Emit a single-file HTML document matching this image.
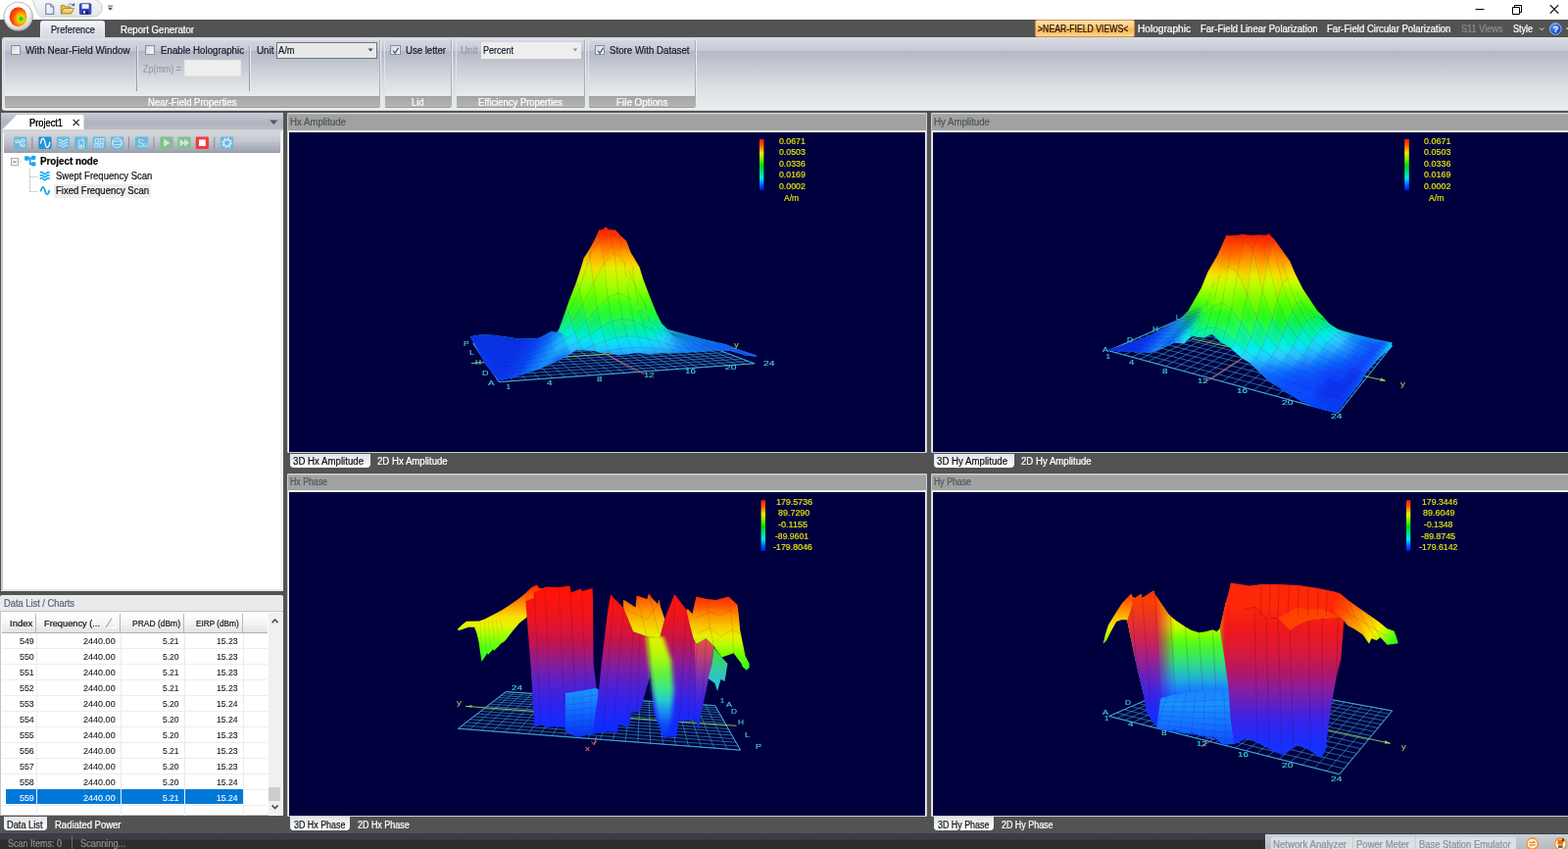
<!DOCTYPE html>
<html lang="en"><head><meta charset="utf-8"><title>Near-Field Views</title>
<style>
*{box-sizing:border-box}
html,body{margin:0;padding:0}
body{width:1600px;height:866px;overflow:hidden;position:relative;background:#535353;font-family:"Liberation Sans",sans-serif;font-size:10px}
.abs{position:absolute}
.t{position:absolute;white-space:pre;line-height:14px;height:14px;transform-origin:0 50%;font-size:10px;-webkit-text-stroke:0.22px currentColor}
#title{position:absolute;left:0;top:0;width:1600px;height:20px;background:#fff}
#tabbar{position:absolute;left:0;top:20px;width:1600px;height:18px;background:#535353}
#qat{position:absolute;left:30px;top:-2px;width:73px;height:19.5px;border:1px solid #b9bdc6;border-radius:0 10px 10px 0/0 10px 10px 0;background:linear-gradient(#f4f5f8,#e4e7ee)}
#tabPref{position:absolute;left:40.5px;top:21.2px;width:66.5px;height:17px;border-radius:3px 3px 0 0;background:linear-gradient(#f4f6f9,#dde1ea 60%,#d6dae4);border:1px solid #e8f4f8;border-bottom:none}
#nfv{position:absolute;left:1055.5px;top:20.2px;width:102px;height:17.8px;border-radius:2px;border:1px solid #c89048;background:linear-gradient(#fde0b0 0%,#fbc878 45%,#f8b048 55%,#fcd890 100%)}
#ribbon{position:absolute;left:1.8px;top:37.6px;width:1600px;height:75px;border-radius:3px 0 0 3px;background:linear-gradient(#b3b8c6 0px,#b3b8c6 14px,#dadfe2 50px,#e9efef 74px);border-left:1.4px solid #e4e7ee;border-bottom:1.3px solid #d9dadc;overflow:hidden}
#ribtop{position:absolute;left:0;top:0;width:100%;height:14.2px;background:linear-gradient(#d9dce4,#c5c9d4)}
.grp{position:absolute;top:40.2px;height:70.2px;border:1px solid #d0d4dc;border-color:#dfe3ea #a9adb6 #9a9a9a #dfe3ea;border-radius:2.5px;background:linear-gradient(#d3d7e1 0px,#c5c9d5 10.6px,#b3b8c6 11px,#dadfe2 44px,#e7eded 57px);overflow:hidden;box-shadow:1px 0 0 #e8ecf0}
.grpl{position:absolute;left:0;right:0;bottom:0;height:11.4px;background:linear-gradient(#a3a3a3,#b6b6b6)}
.cb{position:absolute;width:10.5px;height:10.5px;border:1px solid #8a8e98;background:linear-gradient(135deg,#d4d6da,#fafafa);}
.vsep{position:absolute;top:47px;width:1px;height:46px;background:#9a9ea8;box-shadow:1px 0 0 #e6eaee}
#ltabs{position:absolute;left:1px;top:115px;width:288px;height:18px;background:linear-gradient(#c9cdd6,#aeb3be 55%,#b9bdc6)}
#lpanel{position:absolute;left:1px;top:131.6px;width:288px;height:471.3px;background:#fff;border:1px solid #d9d9d9;border-width:3px 3.5px 2.6px 2.5px;border-color:#d4d4d4 #f2f2f2 #e6e6e6 #c8c8c8}
#ltool{position:absolute;left:4px;top:135px;width:281.5px;height:21.4px;background:linear-gradient(#d3d6dd,#c4c8d0 40%,#a4a9b4 85%,#98a0ac)}
#dlhead{position:absolute;left:0;top:607px;width:289px;height:16.4px;background:#e9eaec;border-radius:2px 2px 0 0}
#dltable{position:absolute;left:0;top:623.2px;width:289px;height:209.2px;background:#fff;border:1px solid #c4c4c4;border-width:1.4px 1px 0.8px 1.6px}
#dlth{position:absolute;left:2px;top:626px;width:271px;height:19.6px;background:linear-gradient(#ffffff,#f4f4f4 50%,#e3e3e3);border-bottom:1px solid #b0b0b0}
.btab{position:absolute;height:14.1px;border-radius:0 0 4px 4px;background:linear-gradient(#dfe3e8,#ffffff);box-shadow:inset 1px 0 0 #d8f0f8}
#status{position:absolute;left:0;top:850px;width:1600px;height:16px;background:linear-gradient(#3a3d48 0,#3c3f4a 6px,#2e2e2e 7px,#2d2d2d 16px)}
.pane{position:absolute;background:#f2f2f2;border-radius:2px;box-shadow:inset 0 0 0 1px #cfcfcf}
.pnavy{position:absolute;background:#00003f}
.phead{position:absolute;background:#a0a2a1;border-top:1px solid #b4b6b5}
</style></head>
<body>
<div id="title"></div>
<div id="tabbar"></div>
<svg class="abs" style="left:0;top:0" width="130" height="38" viewBox="0 0 130 38">
<defs>
<radialGradient id="orbRing" cx="0.42" cy="0.3" r="0.78"><stop offset="0" stop-color="#ffffff"/><stop offset="0.55" stop-color="#fafafa"/><stop offset="0.8" stop-color="#d4d4d4"/><stop offset="1" stop-color="#9a9a9a"/></radialGradient>
<linearGradient id="qatG" x1="0" y1="0" x2="0" y2="1"><stop offset="0" stop-color="#f6f7f9"/><stop offset="1" stop-color="#e2e5ec"/></linearGradient>
<radialGradient id="orbIn" cx="0.66" cy="0.6" r="0.75"><stop offset="0" stop-color="#10c010"/><stop offset="0.1" stop-color="#30d818"/><stop offset="0.22" stop-color="#d8e010"/><stop offset="0.4" stop-color="#ffa000"/><stop offset="0.65" stop-color="#ff4a08"/><stop offset="1" stop-color="#f01808"/></radialGradient>
<linearGradient id="docG" x1="0" y1="0" x2="1" y2="1"><stop offset="0" stop-color="#ffffff"/><stop offset="1" stop-color="#d4ddf0"/></linearGradient>
<linearGradient id="foldG" x1="0" y1="0" x2="0" y2="1"><stop offset="0" stop-color="#fff0a8"/><stop offset="1" stop-color="#e8b030"/></linearGradient>
</defs>
<path d="M32.5 -1 C36.5 5 36 13.5 41.5 17 H95.5 A8.8 8.8 0 0 0 95.5 -0.6 Z" fill="url(#qatG)" stroke="#bfc3cc" stroke-width="0.8"/>
<circle cx="18.7" cy="17.2" r="15.3" fill="#555" opacity="0.3"/>
<circle cx="18.7" cy="16.8" r="14.7" fill="url(#orbRing)" stroke="#8e8e8e" stroke-width="0.5"/>
<ellipse cx="18.6" cy="17.2" rx="8.9" ry="10" fill="url(#orbIn)"/>
<!-- new doc -->
<path d="M46.8 4 h5 l3 3 v7.4 h-8z" fill="url(#docG)" stroke="#5a6a90" stroke-width="0.9"/>
<path d="M51.8 4 v3 h3" fill="none" stroke="#5a6a90" stroke-width="0.8"/>
<!-- folder -->
<path d="M62.3 14 v-8.6 h3.6 l1 1.4 h5 v2" fill="#e8c050" stroke="#a07818" stroke-width="0.8"/>
<path d="M62.3 14 l2.6 -5.4 h10.6 l-2.8 5.4z" fill="url(#foldG)" stroke="#a07818" stroke-width="0.8"/>
<path d="M69.5 4.6 q2.6 -1.8 4.6 0.2 l-1 0.9 3 0.3 -0.2 -3 -0.9 0.9" fill="#4a78d0" stroke="#3058a8" stroke-width="0.4"/>
<!-- save -->
<rect x="81.4" y="3.8" width="11.4" height="10.6" rx="0.8" fill="#3848c8" stroke="#202a90" stroke-width="0.8"/>
<rect x="83.6" y="4.2" width="7" height="4.6" fill="#f4f6ff"/>
<rect x="84.2" y="10.4" width="6" height="3.8" fill="#1a2270"/>
<rect x="85" y="11" width="2" height="2.6" fill="#e8ecff"/>
<!-- dropdown -->
<rect x="110" y="5.6" width="5" height="1" fill="#555"/>
<path d="M110 7.8 h5 l-2.5 3z" fill="#555"/>
</svg>
<svg class="abs" style="left:1500px;top:0" width="100" height="20" viewBox="0 0 100 20">
<path d="M5.5 9.5 h9" stroke="#000" stroke-width="1" fill="none"/>
<path d="M43.5 7.5 h7 v7 h-7z M45.5 7.5 v-2 h7 v7 h-2" stroke="#000" stroke-width="1" fill="none"/>
<path d="M81.8 5.2 l8.4 8.4 M90.2 5.2 l-8.4 8.4" stroke="#000" stroke-width="1.1" fill="none"/>
</svg>
<div id="tabPref"></div>
<span class="t" style="left:51.5px;top:24.2px;color:#1a1a2a;transform:scaleX(0.916);">Preference</span>
<span class="t" style="left:122.5px;top:24.2px;color:#fff;transform:scaleX(0.964);">Report Generator</span>
<div id="nfv"></div>
<span class="t" style="left:1058.5px;top:22.9px;color:#201008;transform:scaleX(0.871);">&gt;NEAR-FIELD VIEWS&lt;</span>
<span class="t" style="left:1160.5px;top:22.9px;color:#fff;transform:scaleX(1.012);">Holographic</span>
<span class="t" style="left:1224.5px;top:22.9px;color:#fff;transform:scaleX(0.951);">Far-Field Linear Polarization</span>
<span class="t" style="left:1354.0px;top:22.9px;color:#fff;transform:scaleX(0.956);">Far-Field Circular Polarization</span>
<span class="t" style="left:1490.5px;top:22.9px;color:#8d8d8d;transform:scaleX(0.917);">S11 Views</span>
<span class="t" style="left:1543.5px;top:22.9px;color:#fff;transform:scaleX(0.900);">Style</span>
<svg class="abs" style="left:1566px;top:20px" width="34" height="18" viewBox="0 0 34 18">
<defs><radialGradient id="helpG" cx="0.4" cy="0.3" r="0.8"><stop offset="0" stop-color="#6aa0ff"/><stop offset="0.6" stop-color="#1a58e0"/><stop offset="1" stop-color="#0a38b0"/></radialGradient></defs>
<path d="M5.2 8.6 l2 2 2 -2" stroke="#fff" stroke-width="0.9" fill="none"/>
<circle cx="21.3" cy="9.4" r="5.8" fill="url(#helpG)" stroke="#dfe8ff" stroke-width="0.7"/>
<text x="21.3" y="12.6" font-family="Liberation Sans, sans-serif" font-size="9.5" font-weight="700" fill="#fff" text-anchor="middle">?</text>
<path d="M32 8.2 h3 l-1.5 2z" fill="#ddd"/>
</svg>
<div id="ribbon"><div id="ribtop"></div></div>
<div class="grp" style="left:3.5px;width:384.0px"><div class="grpl"></div></div>
<span class="t" style="left:150.5px;top:98.3px;color:#fff;transform:scaleX(0.952);">Near-Field Properties</span>
<div class="grp" style="left:391.5px;width:69.5px"><div class="grpl"></div></div>
<span class="t" style="left:420.0px;top:98.3px;color:#fff;transform:scaleX(0.936);">Lid</span>
<div class="grp" style="left:465px;width:131.5px"><div class="grpl"></div></div>
<span class="t" style="left:488.0px;top:98.3px;color:#fff;transform:scaleX(0.945);">Efficiency Properties</span>
<div class="grp" style="left:600px;width:110px"><div class="grpl"></div></div>
<span class="t" style="left:628.5px;top:98.3px;color:#fff;transform:scaleX(0.984);">File Options</span>
<div class="cb" style="left:10.5px;top:45.5px"></div>
<span class="t" style="left:26.2px;top:45.0px;color:#1a1a2a;transform:scaleX(0.989);">With Near-Field Window</span>
<div class="vsep" style="left:139px"></div>
<div class="cb" style="left:147.5px;top:45.5px"></div>
<span class="t" style="left:163.5px;top:45.0px;color:#1a1a2a;transform:scaleX(0.974);">Enable Holographic</span>
<span class="t" style="left:145.5px;top:63.6px;color:#9a9ca4;transform:scaleX(0.894);">Zp(mm) =</span>
<div class="abs" style="left:188px;top:61px;width:57.5px;height:17px;background:#eeeeee;border:1px solid #e4e6ea;box-sizing:border-box"></div>
<div class="vsep" style="left:254px"></div>
<span class="t" style="left:261.5px;top:45.0px;color:#1a1a2a;transform:scaleX(0.983);">Unit</span>
<div class="abs" style="left:282px;top:42.5px;width:103px;height:17px;background:#e8e8e8;border:1px solid #70747c;box-sizing:border-box"></div>
<span class="t" style="left:284.0px;top:45.0px;color:#1a1a2a;transform:scaleX(0.928);">A/m</span>
<svg class="abs" style="left:374px;top:48px" width="8" height="6" viewBox="0 0 8 6"><path d="M1.6 1.6 h5 l-2.5 3z" fill="#444"/></svg>
<div class="cb" style="left:398px;top:45.5px"><svg width="10" height="10" viewBox="0 0 10 10" style="position:absolute;left:0;top:0"><path d="M2.2 4.6 l1.9 2.8 l3.4 -5.6" stroke="#3a5a98" stroke-width="1.3" fill="none"/></svg></div>
<span class="t" style="left:413.5px;top:45.0px;color:#1a1a2a;transform:scaleX(0.958);">Use letter</span>
<span class="t" style="left:469.5px;top:45.0px;color:#9a9ca4;transform:scaleX(0.983);">Unit</span>
<div class="abs" style="left:490.5px;top:43px;width:102px;height:16.5px;background:#eeeeee;"></div>
<span class="t" style="left:492.5px;top:45.0px;color:#1a1a2a;transform:scaleX(0.899);">Percent</span>
<svg class="abs" style="left:583px;top:48px" width="8" height="6" viewBox="0 0 8 6"><path d="M1.8 1.4 h4.4 l-2.2 2.8z" fill="#888"/></svg>
<div class="cb" style="left:606.5px;top:45.5px"><svg width="10" height="10" viewBox="0 0 10 10" style="position:absolute;left:0;top:0"><path d="M2.2 4.6 l1.9 2.8 l3.4 -5.6" stroke="#3a5a98" stroke-width="1.3" fill="none"/></svg></div>
<span class="t" style="left:621.5px;top:45.0px;color:#1a1a2a;transform:scaleX(0.971);">Store With Dataset</span>
<div id="ltabs"></div>
<svg class="abs" style="left:0;top:114px" width="290" height="20" viewBox="0 0 290 20">
<path d="M2.5 18 L16.5 3.8 Q17.3 3 18.5 3 H83.5 Q85.5 3 85.5 5 V18 Z" fill="#ffffff"/>
<path d="M74.6 7.8 l6.2 6.2 M80.8 7.8 l-6.2 6.2" stroke="#222" stroke-width="1.1" fill="none"/>
<path d="M275.2 8.6 h8.2 l-4.1 4.4z" fill="#555"/>
</svg>
<span class="t" style="left:29.7px;top:118.6px;color:#111;transform:scaleX(0.927);text-shadow:0 0 0.4px #111;">Project1</span>
<div id="lpanel"></div>
<div id="ltool"></div>
<svg class="abs" style="left:0;top:135px" width="290" height="22" viewBox="0 0 290 22"><rect x="14" y="4.4" width="13.2" height="12.6" rx="1.2" fill="#6ab8de" opacity="1.0"/><path d="M16 8 h3 v2.4 h-3z M22 7.4 h3 v2.4 h-3z M22 12 h3 v2.4 h-3z M19 9.2 h1.6 v4 h1.6 M20.6 8.6 h1.4" stroke="#c6e6f6" stroke-width="1.1" fill="none" stroke-width="0.9"/><rect x="32.4" y="4.6" width="1" height="12.4" fill="#8a8f9a"/><rect x="39.4" y="4.4" width="13.2" height="12.6" rx="1.2" fill="#1e96dc" opacity="1.0"/><path d="M41.4 11.6 C42.6 4.6 44.8 4.6 46 10.8 S49.6 17.4 50.8 9.8" stroke="#fff" stroke-width="1.3" fill="none"/><rect x="57.9" y="4.4" width="13.2" height="12.6" rx="1.2" fill="#6ab8de" opacity="1.0"/><path d="M59.8 8.4 q1.6 -2 3.2 0 t3.2 0 t3.2 0 M59.8 11.2 q1.6 -2 3.2 0 t3.2 0 t3.2 0 M59.8 14 q1.6 -2 3.2 0 t3.2 0 t3.2 0" stroke="#c6e6f6" stroke-width="1.1" fill="none"/><rect x="76.2" y="4.4" width="13.2" height="12.6" rx="1.2" fill="#6ab8de" opacity="1.0"/><rect x="80.4" y="8" width="5" height="8" rx="0.8" stroke="#c6e6f6" stroke-width="1.1" fill="none"/><path d="M84.4 8 v-2.6" stroke="#c6e6f6" stroke-width="1.1" fill="none"/><rect x="81.8" y="12.6" width="2.2" height="2.2" fill="#d8eefa"/><rect x="94.7" y="4.4" width="13.2" height="12.6" rx="1.2" fill="#6ab8de" opacity="1.0"/><path d="M97.6 6.6 h3.4 l-0.6 3.4 h-3.4z M102.8 6.6 h3.4 l-0.6 3.4 h-3.4z M96.8 11.6 h3.4 l-0.6 3.4 h-3.4z M102 11.6 h3.4 l-0.6 3.4 h-3.4z" stroke="#c6e6f6" stroke-width="1.1" fill="none"/><rect x="112.9" y="4.4" width="13.2" height="12.6" rx="1.2" fill="#6ab8de" opacity="1.0"/><ellipse cx="119.5" cy="10.7" rx="5" ry="4.8" stroke="#c6e6f6" stroke-width="1.1" fill="none"/><ellipse cx="119.5" cy="10.7" rx="5" ry="1.8" stroke="#c6e6f6" stroke-width="1.1" fill="none"/><rect x="131" y="4.6" width="1" height="12.4" fill="#8a8f9a"/><rect x="138" y="4.4" width="13.2" height="12.6" rx="1.2" fill="#6ab8de" opacity="1.0"/><text x="140" y="14.6" font-family="Liberation Sans, sans-serif" font-size="10.5" fill="#cfe8f6">S</text><text x="146.4" y="15.4" font-family="Liberation Sans, sans-serif" font-size="5" fill="#cfe8f6">11</text><rect x="156.5" y="4.6" width="1" height="12.4" fill="#8a8f9a"/><rect x="163.4" y="4.4" width="13.2" height="12.6" rx="1.2" fill="#84bf90" opacity="1.0"/><path d="M167.2 6.8 l6.4 3.9 l-6.4 3.9z" fill="#d2ead6"/><rect x="181.5" y="4.4" width="13.2" height="12.6" rx="1.2" fill="#84bf90" opacity="1.0"/><path d="M183.6 6.8 l5 3.9 l-5 3.9z M188.2 6.8 l5 3.9 l-5 3.9z" fill="#d2ead6"/><rect x="199.8" y="4.4" width="13.2" height="12.6" rx="1.2" fill="#f03c3c" opacity="1.0"/><rect x="203" y="7.4" width="6.8" height="6.6" fill="#fff"/><rect x="218.3" y="4.6" width="1" height="12.4" fill="#8a8f9a"/><rect x="225" y="4.4" width="13.2" height="12.6" rx="1.2" fill="#6ab8de" opacity="1.0"/><circle cx="231.6" cy="10.7" r="3.3" stroke="#d8eefa" stroke-width="1.5" fill="none"/><circle cx="231.6" cy="10.7" r="4.8" stroke="#d8eefa" stroke-width="1.4" stroke-dasharray="1.6 2.17" fill="none"/></svg>
<svg class="abs" style="left:0;top:156px" width="290" height="50" viewBox="0 0 290 50"><rect x="11.4" y="5.4" width="7" height="7.4" fill="#fff" stroke="#9a9a9a" stroke-width="0.9"/><path d="M13 9.1 h3.8" stroke="#4060a0" stroke-width="1"/><path d="M19.4 9 h4" stroke="#b0b0b0" stroke-width="0.9" stroke-dasharray="1 1"/><path d="M30.5 16 v23.4 M30.5 24.4 h8.4 M30.5 39.4 h8.4" stroke="#9a9a9a" stroke-width="0.9" stroke-dasharray="1 1" fill="none"/><rect x="25" y="3.2" width="4.8" height="4.6" rx="1" fill="#18a8ec"/><rect x="32" y="2.8" width="4.4" height="4.2" rx="1" fill="#18a8ec"/><rect x="32" y="9.2" width="4.4" height="4.4" rx="1" fill="#18a8ec"/><path d="M29.6 5.4 h2.6 M30.8 5.4 v6 h1.6" stroke="#18a8ec" stroke-width="1.7" fill="none"/><path d="M40.8 20.6 q1.7 -2.2 3.4 0 t3.4 0 t3 0 M40.8 23.6 q1.7 -2.2 3.4 0 t3.4 0 t3 0 M40.8 26.6 q1.7 -2.2 3.4 0 t3.4 0 t3 0" stroke="#18a8ec" stroke-width="1.7" fill="none"/><path d="M41.6 39.4 C42.8 33.6 44.6 33.6 45.9 38.6 S49.2 43.6 50.4 38" stroke="#18a8ec" stroke-width="1.8" fill="none"/></svg>
<span class="t" style="left:41.0px;top:158.1px;font-weight:700;transform:scaleX(0.979);">Project node</span>
<span class="t" style="left:57.0px;top:173.1px;color:#111;transform:scaleX(0.951);">Swept Frequency Scan</span>
<div class="abs" style="left:55px;top:187.5px;width:99px;height:14.5px;background:#eeeeee"></div>
<span class="t" style="left:57.0px;top:188.1px;color:#111;transform:scaleX(0.949);">Fixed Frequency Scan</span>
<div id="dlhead"></div>
<span class="t" style="left:3.8px;top:608.8px;color:#5a6274;transform:scaleX(0.932);">Data List / Charts</span>
<div id="dltable"></div>
<div id="dlth"></div>
<div class="abs" style="left:36.0px;top:626px;width:1px;height:19px;background:#b8b8b8"></div>
<div class="abs" style="left:37.2px;top:646px;width:1px;height:186px;background:#ebebeb"></div>
<div class="abs" style="left:121.8px;top:626px;width:1px;height:19px;background:#b8b8b8"></div>
<div class="abs" style="left:123.0px;top:646px;width:1px;height:186px;background:#ebebeb"></div>
<div class="abs" style="left:187.0px;top:626px;width:1px;height:19px;background:#b8b8b8"></div>
<div class="abs" style="left:188.2px;top:646px;width:1px;height:186px;background:#ebebeb"></div>
<div class="abs" style="left:247.0px;top:626px;width:1px;height:19px;background:#b8b8b8"></div>
<div class="abs" style="left:248.2px;top:646px;width:1px;height:186px;background:#ebebeb"></div>
<span class="t" style="left:9.5px;top:629.4px;font-size:9.3px;color:#111;transform:scaleX(1.024);">Index</span>
<span class="t" style="left:45.0px;top:629.4px;font-size:9.3px;color:#111;transform:scaleX(0.994);">Frequency (...</span>
<svg class="abs" style="left:106px;top:629px" width="16" height="13" viewBox="0 0 16 13"><path d="M2.2 11 L8 1.6" stroke="#888" stroke-width="0.9" fill="none"/><path d="M8 1.6 L13.6 11.6 H2" stroke="#fff" stroke-width="1" fill="none"/></svg>
<span class="t" style="left:134.8px;top:629.4px;font-size:9.3px;color:#111;transform:scaleX(0.912);">PRAD (dBm)</span>
<span class="t" style="left:199.5px;top:629.4px;font-size:9.3px;color:#111;transform:scaleX(0.884);">EIRP (dBm)</span>
<div class="abs" style="left:2px;top:661.2px;width:271px;height:1px;background:#ededed"></div>
<span class="t" style="left:20.4px;top:647.1px;font-size:9.2px;color:#111;transform:scaleX(0.965);-webkit-text-stroke:0.08px currentColor;">549</span>
<span class="t" style="left:85.3px;top:647.1px;font-size:9.2px;color:#111;transform:scaleX(0.984);-webkit-text-stroke:0.08px currentColor;">2440.00</span>
<span class="t" style="left:166.4px;top:647.1px;font-size:9.2px;color:#111;transform:scaleX(0.928);-webkit-text-stroke:0.08px currentColor;">5.21</span>
<span class="t" style="left:220.9px;top:647.1px;font-size:9.2px;color:#111;transform:scaleX(0.939);-webkit-text-stroke:0.08px currentColor;">15.23</span>
<div class="abs" style="left:2px;top:677.2px;width:271px;height:1px;background:#ededed"></div>
<span class="t" style="left:20.4px;top:663.1px;font-size:9.2px;color:#111;transform:scaleX(0.965);-webkit-text-stroke:0.08px currentColor;">550</span>
<span class="t" style="left:85.3px;top:663.1px;font-size:9.2px;color:#111;transform:scaleX(0.984);-webkit-text-stroke:0.08px currentColor;">2440.00</span>
<span class="t" style="left:166.4px;top:663.1px;font-size:9.2px;color:#111;transform:scaleX(0.928);-webkit-text-stroke:0.08px currentColor;">5.20</span>
<span class="t" style="left:220.9px;top:663.1px;font-size:9.2px;color:#111;transform:scaleX(0.939);-webkit-text-stroke:0.08px currentColor;">15.23</span>
<div class="abs" style="left:2px;top:693.2px;width:271px;height:1px;background:#ededed"></div>
<span class="t" style="left:20.4px;top:679.1px;font-size:9.2px;color:#111;transform:scaleX(0.965);-webkit-text-stroke:0.08px currentColor;">551</span>
<span class="t" style="left:85.3px;top:679.1px;font-size:9.2px;color:#111;transform:scaleX(0.984);-webkit-text-stroke:0.08px currentColor;">2440.00</span>
<span class="t" style="left:166.4px;top:679.1px;font-size:9.2px;color:#111;transform:scaleX(0.928);-webkit-text-stroke:0.08px currentColor;">5.21</span>
<span class="t" style="left:220.9px;top:679.1px;font-size:9.2px;color:#111;transform:scaleX(0.939);-webkit-text-stroke:0.08px currentColor;">15.23</span>
<div class="abs" style="left:2px;top:709.2px;width:271px;height:1px;background:#ededed"></div>
<span class="t" style="left:20.4px;top:695.1px;font-size:9.2px;color:#111;transform:scaleX(0.965);-webkit-text-stroke:0.08px currentColor;">552</span>
<span class="t" style="left:85.3px;top:695.1px;font-size:9.2px;color:#111;transform:scaleX(0.984);-webkit-text-stroke:0.08px currentColor;">2440.00</span>
<span class="t" style="left:166.4px;top:695.1px;font-size:9.2px;color:#111;transform:scaleX(0.928);-webkit-text-stroke:0.08px currentColor;">5.21</span>
<span class="t" style="left:220.9px;top:695.1px;font-size:9.2px;color:#111;transform:scaleX(0.939);-webkit-text-stroke:0.08px currentColor;">15.23</span>
<div class="abs" style="left:2px;top:725.2px;width:271px;height:1px;background:#ededed"></div>
<span class="t" style="left:20.4px;top:711.1px;font-size:9.2px;color:#111;transform:scaleX(0.965);-webkit-text-stroke:0.08px currentColor;">553</span>
<span class="t" style="left:85.3px;top:711.1px;font-size:9.2px;color:#111;transform:scaleX(0.984);-webkit-text-stroke:0.08px currentColor;">2440.00</span>
<span class="t" style="left:166.4px;top:711.1px;font-size:9.2px;color:#111;transform:scaleX(0.928);-webkit-text-stroke:0.08px currentColor;">5.20</span>
<span class="t" style="left:220.9px;top:711.1px;font-size:9.2px;color:#111;transform:scaleX(0.939);-webkit-text-stroke:0.08px currentColor;">15.24</span>
<div class="abs" style="left:2px;top:741.2px;width:271px;height:1px;background:#ededed"></div>
<span class="t" style="left:20.4px;top:727.1px;font-size:9.2px;color:#111;transform:scaleX(0.965);-webkit-text-stroke:0.08px currentColor;">554</span>
<span class="t" style="left:85.3px;top:727.1px;font-size:9.2px;color:#111;transform:scaleX(0.984);-webkit-text-stroke:0.08px currentColor;">2440.00</span>
<span class="t" style="left:166.4px;top:727.1px;font-size:9.2px;color:#111;transform:scaleX(0.928);-webkit-text-stroke:0.08px currentColor;">5.20</span>
<span class="t" style="left:220.9px;top:727.1px;font-size:9.2px;color:#111;transform:scaleX(0.939);-webkit-text-stroke:0.08px currentColor;">15.24</span>
<div class="abs" style="left:2px;top:757.2px;width:271px;height:1px;background:#ededed"></div>
<span class="t" style="left:20.4px;top:743.1px;font-size:9.2px;color:#111;transform:scaleX(0.965);-webkit-text-stroke:0.08px currentColor;">555</span>
<span class="t" style="left:85.3px;top:743.1px;font-size:9.2px;color:#111;transform:scaleX(0.984);-webkit-text-stroke:0.08px currentColor;">2440.00</span>
<span class="t" style="left:166.4px;top:743.1px;font-size:9.2px;color:#111;transform:scaleX(0.928);-webkit-text-stroke:0.08px currentColor;">5.20</span>
<span class="t" style="left:220.9px;top:743.1px;font-size:9.2px;color:#111;transform:scaleX(0.939);-webkit-text-stroke:0.08px currentColor;">15.23</span>
<div class="abs" style="left:2px;top:773.2px;width:271px;height:1px;background:#ededed"></div>
<span class="t" style="left:20.4px;top:759.1px;font-size:9.2px;color:#111;transform:scaleX(0.965);-webkit-text-stroke:0.08px currentColor;">556</span>
<span class="t" style="left:85.3px;top:759.1px;font-size:9.2px;color:#111;transform:scaleX(0.984);-webkit-text-stroke:0.08px currentColor;">2440.00</span>
<span class="t" style="left:166.4px;top:759.1px;font-size:9.2px;color:#111;transform:scaleX(0.928);-webkit-text-stroke:0.08px currentColor;">5.21</span>
<span class="t" style="left:220.9px;top:759.1px;font-size:9.2px;color:#111;transform:scaleX(0.939);-webkit-text-stroke:0.08px currentColor;">15.23</span>
<div class="abs" style="left:2px;top:789.2px;width:271px;height:1px;background:#ededed"></div>
<span class="t" style="left:20.4px;top:775.1px;font-size:9.2px;color:#111;transform:scaleX(0.965);-webkit-text-stroke:0.08px currentColor;">557</span>
<span class="t" style="left:85.3px;top:775.1px;font-size:9.2px;color:#111;transform:scaleX(0.984);-webkit-text-stroke:0.08px currentColor;">2440.00</span>
<span class="t" style="left:166.4px;top:775.1px;font-size:9.2px;color:#111;transform:scaleX(0.928);-webkit-text-stroke:0.08px currentColor;">5.20</span>
<span class="t" style="left:220.9px;top:775.1px;font-size:9.2px;color:#111;transform:scaleX(0.939);-webkit-text-stroke:0.08px currentColor;">15.23</span>
<div class="abs" style="left:2px;top:805.2px;width:271px;height:1px;background:#ededed"></div>
<span class="t" style="left:20.4px;top:791.1px;font-size:9.2px;color:#111;transform:scaleX(0.965);-webkit-text-stroke:0.08px currentColor;">558</span>
<span class="t" style="left:85.3px;top:791.1px;font-size:9.2px;color:#111;transform:scaleX(0.984);-webkit-text-stroke:0.08px currentColor;">2440.00</span>
<span class="t" style="left:166.4px;top:791.1px;font-size:9.2px;color:#111;transform:scaleX(0.928);-webkit-text-stroke:0.08px currentColor;">5.20</span>
<span class="t" style="left:220.9px;top:791.1px;font-size:9.2px;color:#111;transform:scaleX(0.939);-webkit-text-stroke:0.08px currentColor;">15.24</span>
<div class="abs" style="left:6px;top:805.0px;width:241.8px;height:15px;background:#0078d7"></div>
<div class="abs" style="left:36.7px;top:805.0px;width:1px;height:15px;background:#e8f0fa"></div>
<div class="abs" style="left:122.5px;top:805.0px;width:1px;height:15px;background:#e8f0fa"></div>
<div class="abs" style="left:187.7px;top:805.0px;width:1px;height:15px;background:#e8f0fa"></div>
<div class="abs" style="left:2px;top:821.2px;width:271px;height:1px;background:#ededed"></div>
<span class="t" style="left:20.4px;top:807.1px;font-size:9.2px;color:#fff;transform:scaleX(0.965);-webkit-text-stroke:0.08px currentColor;">559</span>
<span class="t" style="left:85.3px;top:807.1px;font-size:9.2px;color:#fff;transform:scaleX(0.984);-webkit-text-stroke:0.08px currentColor;">2440.00</span>
<span class="t" style="left:166.4px;top:807.1px;font-size:9.2px;color:#fff;transform:scaleX(0.928);-webkit-text-stroke:0.08px currentColor;">5.21</span>
<span class="t" style="left:220.9px;top:807.1px;font-size:9.2px;color:#fff;transform:scaleX(0.939);-webkit-text-stroke:0.08px currentColor;">15.24</span>
<div class="abs" style="left:273.5px;top:625px;width:15px;height:207px;background:#f0f0f0"></div>
<div class="abs" style="left:274.2px;top:803px;width:12px;height:14px;background:#cdcdcd"></div>
<svg class="abs" style="left:273.5px;top:625px" width="15" height="207" viewBox="0 0 15 207"><path d="M3.6 10.2 l3 -3.2 3 3.2" stroke="#505050" stroke-width="1.6" fill="none"/><path d="M3.6 196.4 l3 3.2 3 -3.2" stroke="#505050" stroke-width="1.6" fill="none"/></svg>
<div class="btab" style="left:3.5px;top:833px;width:44px"></div>
<span class="t" style="left:7.0px;top:834.8px;color:#111;transform:scaleX(0.925);">Data List</span>
<span class="t" style="left:55.5px;top:834.8px;color:#fff;transform:scaleX(0.949);">Radiated Power</span>
<div id="status"></div>
<span class="t" style="left:8.0px;top:854.0px;color:#8e8e8e;transform:scaleX(0.900);">Scan Items: 0</span>
<div class="abs" style="left:72.8px;top:852px;width:1px;height:14px;background:#6a6a6a"></div>
<span class="t" style="left:81.5px;top:854.0px;color:#8e8e8e;transform:scaleX(0.929);">Scanning...</span>
<div class="abs" style="left:1291px;top:851px;width:309px;height:15px;background:linear-gradient(#c9cfd6,#b4bac2)"></div>
<div class="abs" style="left:1297px;top:853.5px;width:250px;height:12.5px;background:#d9e1e4;border-radius:2px 2px 0 0"></div>
<div class="abs" style="left:1379.5px;top:854px;width:1px;height:12px;background:#c4ccd0"></div>
<div class="abs" style="left:1443.5px;top:854px;width:1px;height:12px;background:#c4ccd0"></div>
<span class="t" style="left:1299.0px;top:854.8px;color:#8a9198;transform:scaleX(0.964);">Network Analyzer</span>
<span class="t" style="left:1383.5px;top:854.8px;color:#8a9198;transform:scaleX(0.953);">Power Meter</span>
<span class="t" style="left:1448.0px;top:854.8px;color:#8a9198;transform:scaleX(0.940);">Base Station Emulator</span>
<svg class="abs" style="left:1550px;top:851px" width="50" height="15" viewBox="0 0 50 15">
<circle cx="13.6" cy="9.6" r="5.6" fill="#fff4e0" stroke="#f09020" stroke-width="1.3"/>
<path d="M10.4 8.4 h5.4 l-1.4 -1.4 M16.8 10.8 h-5.4 l1.4 1.4" stroke="#f08010" stroke-width="1.2" fill="none"/>
<circle cx="42.4" cy="9.8" r="5.8" fill="#fff4e0" stroke="#f09020" stroke-width="1.3"/>
<rect x="39.4" y="5.6" width="5.6" height="5" fill="#f07010"/>
<rect x="44.2" y="4.4" width="1.6" height="3" fill="#222"/>
<rect x="40" y="11.4" width="4.6" height="2.4" fill="#555"/>
</svg>
<div class="pane" style="left:293.1px;top:115.4px;width:652.9px;height:346.8px"></div>
<div class="pnavy" style="left:295.3px;top:134.6px;width:648.9px;height:326.4px"></div>
<div class="phead" style="left:294.1px;top:116.4px;width:650.9px;height:16.5px"></div>
<div class="pane" style="left:950px;top:115.4px;width:654.0px;height:346.8px"></div>
<div class="pnavy" style="left:952.2px;top:134.6px;width:650.0px;height:326.4px"></div>
<div class="phead" style="left:951.0px;top:116.4px;width:652.0px;height:16.5px"></div>
<div class="pane" style="left:293.1px;top:483.4px;width:652.9px;height:349.4px"></div>
<div class="pnavy" style="left:295.3px;top:502px;width:648.9px;height:329.6px"></div>
<div class="phead" style="left:294.1px;top:484.4px;width:650.9px;height:15.7px"></div>
<div class="pane" style="left:950px;top:483.4px;width:654.0px;height:349.4px"></div>
<div class="pnavy" style="left:952.2px;top:502px;width:650.0px;height:329.6px"></div>
<div class="phead" style="left:951.0px;top:484.4px;width:652.0px;height:15.7px"></div>
<span class="t" style="left:296.4px;top:117.8px;color:#50545c;transform:scaleX(0.967);">Hx Amplitude</span><span class="t" style="left:953.4px;top:117.8px;color:#50545c;transform:scaleX(0.967);">Hy Amplitude</span><span class="t" style="left:296.4px;top:485.3px;color:#50545c;transform:scaleX(0.876);">Hx Phase</span><span class="t" style="left:953.4px;top:485.3px;color:#50545c;transform:scaleX(0.876);">Hy Phase</span><div class="btab" style="left:296px;top:463px;width:81.5px"></div><span class="t" style="left:299.4px;top:464.0px;color:#111;transform:scaleX(0.967);">3D Hx Amplitude</span><span class="t" style="left:385.0px;top:464.0px;color:#fff;transform:scaleX(0.963);">2D Hx Amplitude</span><div class="btab" style="left:953px;top:463px;width:81.5px"></div><span class="t" style="left:956.4px;top:464.0px;color:#111;transform:scaleX(0.967);">3D Hy Amplitude</span><span class="t" style="left:1042.0px;top:464.0px;color:#fff;transform:scaleX(0.963);">2D Hy Amplitude</span><div class="btab" style="left:296px;top:833px;width:61px"></div><span class="t" style="left:299.6px;top:834.9px;color:#111;transform:scaleX(0.889);">3D Hx Phase</span><span class="t" style="left:365.0px;top:834.9px;color:#fff;transform:scaleX(0.893);">2D Hx Phase</span><div class="btab" style="left:953px;top:833px;width:61px"></div><span class="t" style="left:956.6px;top:834.9px;color:#111;transform:scaleX(0.889);">3D Hy Phase</span><span class="t" style="left:1022.0px;top:834.9px;color:#fff;transform:scaleX(0.891);">2D Hy Phase</span>
<svg class="abs" style="left:295px;top:134px" width="649" height="327" viewBox="295 134 649 327"><path d="M509.1 389.6L482.9 350.4M523.3 388.6L493.8 350.0M537.1 387.6L504.4 349.5M550.6 386.6L514.9 349.1M563.9 385.7L525.3 348.7M576.8 384.7L535.4 348.3M589.5 383.8L545.4 347.9M601.9 382.9L555.2 347.5M614.1 382.0L564.9 347.1M625.9 381.2L574.4 346.7M637.6 380.3L583.8 346.4M649.0 379.5L593.0 346.0M660.2 378.7L602.1 345.6M671.1 377.9L611.0 345.3M681.9 377.1L619.8 344.9M692.4 376.4L628.5 344.6M702.7 375.6L637.0 344.2M712.9 374.9L645.4 343.9M722.8 374.2L653.7 343.6M732.6 373.5L661.8 343.3M742.1 372.8L669.9 342.9M751.5 372.1L677.8 342.6M760.7 371.5L685.6 342.3M769.8 370.8L693.3 342.0M509.1 389.6L769.8 370.8M506.8 386.2L763.5 368.4M504.6 382.9L757.3 366.1M502.5 379.8L751.4 363.9M500.5 376.8L745.7 361.7M498.6 373.9L740.2 359.6M496.8 371.1L734.8 357.6M495.0 368.5L729.6 355.7M493.3 365.9L724.6 353.8M491.6 363.5L719.7 351.9M490.0 361.1L715.0 350.2M488.5 358.8L710.4 348.4M487.0 356.6L705.9 346.8M485.6 354.5L701.6 345.1M484.2 352.4L697.4 343.5M482.9 350.4L693.3 342.0" stroke="#3d9fd0" stroke-width="0.8" fill="none" opacity="0.78"/><path d="M509.1 389.6 L769.8 370.8 L693.3 342 L482.9 350.4Z" stroke="#48bce0" stroke-width="0.9" fill="none" opacity="0.9"/><path d="M481 370.6 L738 352.9" stroke="#98d450" stroke-width="0.9" fill="none"/><path d="M657.5 381.5 L612 358" stroke="#f07060" stroke-width="0.9" fill="none"/><defs><linearGradient id="hxaM" gradientUnits="userSpaceOnUse" x1="0" y1="231" x2="0" y2="390"><stop offset="0.000" stop-color="#ff1c00"/><stop offset="0.057" stop-color="#ff3000"/><stop offset="0.101" stop-color="#ff5400"/><stop offset="0.170" stop-color="#ff9800"/><stop offset="0.220" stop-color="#ffc000"/><stop offset="0.264" stop-color="#f0e800"/><stop offset="0.327" stop-color="#c0f800"/><stop offset="0.403" stop-color="#88ff00"/><stop offset="0.478" stop-color="#50ff08"/><stop offset="0.553" stop-color="#28f828"/><stop offset="0.629" stop-color="#10f070"/><stop offset="0.692" stop-color="#00f0c0"/><stop offset="0.736" stop-color="#08e8f8"/><stop offset="0.783" stop-color="#30c4ff"/><stop offset="0.818" stop-color="#2094ff"/><stop offset="1.000" stop-color="#1070ff"/></linearGradient><linearGradient id="hxaL" gradientUnits="userSpaceOnUse" x1="530" y1="355" x2="564.4" y2="375.4"><stop offset="0.000" stop-color="#0a34ee" stop-opacity="1"/><stop offset="0.300" stop-color="#0a44f6" stop-opacity="1"/><stop offset="0.550" stop-color="#1070ff" stop-opacity="1"/><stop offset="0.800" stop-color="#1ca8ff" stop-opacity="0.7"/><stop offset="1.000" stop-color="#24d0ff" stop-opacity="0"/></linearGradient><linearGradient id="hxaR" gradientUnits="userSpaceOnUse" x1="672" y1="0" x2="772" y2="0"><stop offset="0.000" stop-color="#18c0ff" stop-opacity="0"/><stop offset="0.180" stop-color="#1490ff" stop-opacity="0.9"/><stop offset="0.430" stop-color="#1070ff" stop-opacity="1"/><stop offset="0.730" stop-color="#0c54fc" stop-opacity="1"/><stop offset="1.000" stop-color="#0838f0" stop-opacity="1"/></linearGradient><linearGradient id="hxaMg" gradientUnits="userSpaceOnUse" x1="0" y1="300" x2="0" y2="400"><stop offset="0.000" stop-color="#fff" stop-opacity="0.25"/><stop offset="0.250" stop-color="#fff" stop-opacity="0.6"/><stop offset="0.450" stop-color="#fff" stop-opacity="1"/><stop offset="1.000" stop-color="#fff" stop-opacity="1"/></linearGradient><mask id="hxaMask" maskUnits="userSpaceOnUse" x="460" y="220" width="330" height="180"><rect x="460" y="220" width="330" height="180" fill="url(#hxaMg)"/></mask><clipPath id="hxaC"><path d="M480 343.2 L490 341.6 L502.1 341.7 L516 343.6 L530.3 345.7 L541 345.4 L550.4 344.7 L557 341.2 L562.4 338.6 L568.4 339.1 L570.4 336.1 L575.5 322 L580.6 307 L587.2 290.3 L592.2 275.2 L595.7 263.2 L602.3 253.1 L608.3 241.6 L611.3 234.6 L615 234.2 L618.1 231.2 L621 234.2 L627.9 234.6 L633.4 240.6 L639.4 246.1 L643.5 257.2 L652.5 272.2 L656.5 285.3 L664.8 307 L670.2 320.1 L675.2 330.1 L681.2 336.1 L700.3 341.2 L720.4 346.7 L740.5 351.2 L755.6 357.2 L771.6 362.2 L771.9 364 L760.6 362.4 L745.5 357.9 L730.4 357.2 L700.3 359.2 L675 360 L660.1 361.2 L650 359.6 L640 361.2 L630 362.2 L622 359.4 L615.6 360.6 L606 357.8 L595.6 357.2 L587.5 357.2 L578.5 363.2 L566.4 369.3 L550.4 376.3 L526.2 384.3 L509.2 388.6 L495 371Z"/></clipPath><filter id="blur2" x="-5%" y="-5%" width="110%" height="110%"><feGaussianBlur stdDeviation="1.8 4.5"/></filter></defs><path d="M480 343.2 L490 341.6 L502.1 341.7 L516 343.6 L530.3 345.7 L541 345.4 L550.4 344.7 L557 341.2 L562.4 338.6 L568.4 339.1 L570.4 336.1 L575.5 322 L580.6 307 L587.2 290.3 L592.2 275.2 L595.7 263.2 L602.3 253.1 L608.3 241.6 L611.3 234.6 L615 234.2 L618.1 231.2 L621 234.2 L627.9 234.6 L633.4 240.6 L639.4 246.1 L643.5 257.2 L652.5 272.2 L656.5 285.3 L664.8 307 L670.2 320.1 L675.2 330.1 L681.2 336.1 L700.3 341.2 L720.4 346.7 L740.5 351.2 L755.6 357.2 L771.6 362.2 L771.9 364 L760.6 362.4 L745.5 357.9 L730.4 357.2 L700.3 359.2 L675 360 L660.1 361.2 L650 359.6 L640 361.2 L630 362.2 L622 359.4 L615.6 360.6 L606 357.8 L595.6 357.2 L587.5 357.2 L578.5 363.2 L566.4 369.3 L550.4 376.3 L526.2 384.3 L509.2 388.6 L495 371Z" fill="url(#hxaM)"/><g clip-path="url(#hxaC)"><g mask="url(#hxaMask)"><g filter="url(#blur2)"><path d="M681.7 335.9l7.9-.4-4-1.3-7.8 .4z" fill="#14f"/><path d="M673.7 336.1l8-.2-3.9-1.3-7.9 .3z" fill="#14f"/><path d="M665.6 336.2l8.1-.1-3.8-1.2-8.1 .2z" fill="#14f"/><path d="M677.7 337.3l8.1-.1-4.1-1.3-8 .2z" fill="#15f"/><path d="M657.3 336.1l8.3 .1-3.8-1.1-8.1 .1z" fill="#15f"/><path d="M689.9 338.5l8.1-.2-4.3-1.4-7.9 .3z" fill="#15f"/><path d="M669.5 337.2l8.2 .1-4-1.2-8.1 .1z" fill="#15f"/><path d="M649 335.7l8.3 .4-3.6-.9-8.3 0z" fill="#15f"/><path d="M681.7 338.4l8.2 .1-4.1-1.3-8.1 .1z" fill="#15f"/><path d="M661.1 336.8l8.4 .4-3.9-1-8.3-.1z" fill="#15f"/><path d="M640.5 335.2l8.5 .5-3.6-.5-8.4-.1z" fill="#15f"/><path d="M694.2 339.8l8.2-.1-4.4-1.4-8.1 .2z" fill="#15f"/><path d="M673.4 338.1l8.3 .3-4-1.1-8.2-.1z" fill="#15f"/><path d="M652.6 336l8.5 .8-3.8-.7-8.3-.4z" fill="#16f"/><path d="M631.8 334.4l8.7 .8-3.5-.1-8.5-.3z" fill="#16f"/><path d="M685.9 339.6l8.3 .2-4.3-1.3-8.2-.1z" fill="#15f"/><path d="M665 337.3l8.4 .8-3.9-.9-8.4-.4z" fill="#16f"/><path d="M644 334.7l8.6 1.3-3.6-.3-8.5-.5z" fill="#17f"/><path d="M623.1 333.5l8.7 .9-3.3 .4-8.7-.2z" fill="#17f"/><path d="M698.6 341.2l8.3 0-4.5-1.5-8.2 .1z" fill="#15f"/><path d="M677.5 339l8.4 .6-4.2-1.2-8.3-.3z" fill="#15f"/><path d="M656.4 335.8l8.6 1.5-3.9-.5-8.5-.8z" fill="#17f"/><path d="M635.3 333l8.7 1.7-3.5 .5-8.7-.8z" fill="#28f"/><path d="M614.2 332.7l8.9 .8-3.3 1.1-8.8-.2z" fill="#17f"/><path d="M690.3 340.9l8.3 .3-4.4-1.4-8.3-.2z" fill="#15f"/><path d="M669 337.6l8.5 1.4-4.1-.9-8.4-.8z" fill="#17f"/><path d="M647.7 333.5l8.7 2.3-3.8 .2-8.6-1.3z" fill="#28f"/><path d="M626.4 331l8.9 2-3.5 1.4-8.7-.9z" fill="#29f"/><path d="M605.1 332.3l9.1 .4-3.2 1.7-8.9 .1z" fill="#28f"/><path d="M703.2 342.7l8.3 .1-4.6-1.6-8.3 0z" fill="#15f"/><path d="M681.8 339.9l8.5 1-4.4-1.3-8.4-.6z" fill="#16f"/><path d="M660.3 335.3l8.7 2.3-4-.3-8.6-1.5z" fill="#28f"/><path d="M638.9 330.3l8.8 3.2-3.7 1.2-8.7-1.7z" fill="#3bf"/><path d="M617.4 329l9 2-3.3 2.5-8.9-.8z" fill="#3bf"/><path d="M595.9 332.3l9.2 0-3 2.2-9.1 .2z" fill="#28f"/><path d="M694.7 342.2l8.5 .5-4.6-1.5-8.3-.3z" fill="#15f"/><path d="M673.1 338l8.7 1.9-4.3-.9-8.5-1.4z" fill="#17f"/><path d="M651.5 331.6l8.8 3.7-3.9 .5-8.7-2.3z" fill="#3bf"/><path d="M629.9 326.4l9 3.9-3.6 2.7-8.9-2z" fill="#2cf"/><path d="M608.2 327.7l9.2 1.3-3.2 3.7-9.1-.4z" fill="#2cf"/><path d="M586.6 333l9.3-.7-2.9 2.4-9.2 .5z" fill="#28f"/><path d="M707.9 344.3l8.4 .1-4.8-1.6-8.3-.1z" fill="#15f"/><path d="M686.1 341l8.6 1.2-4.4-1.3-8.5-1z" fill="#16f"/><path d="M664.4 334.7l8.7 3.3-4.1-.4-8.7-2.3z" fill="#2af"/><path d="M642.6 326.2l8.9 5.4-3.8 1.9-8.8-3.2z" fill="#1df"/><path d="M620.8 322.3l9.1 4.1-3.5 4.6-9-2z" fill="#0ee"/><path d="M598.9 327.4l9.3 .3-3.1 4.6-9.2 0z" fill="#2cf"/><path d="M577.1 334.2l9.5-1.2-2.8 2.2-9.4 .8z" fill="#28f"/><path d="M699.3 343.7l8.6 .6-4.7-1.6-8.5-.5z" fill="#16f"/><path d="M677.4 338.6l8.7 2.4-4.3-1.1-8.7-1.9z" fill="#28f"/><path d="M655.4 329.2l9 5.5-4.1 .6-8.8-3.7z" fill="#2cf"/><path d="M633.5 319.1l9.1 7.1-3.7 4.1-9-3.9z" fill="#0ec"/><path d="M611.5 319.2l9.3 3.1-3.4 6.7-9.2-1.3z" fill="#0ec"/><path d="M589.5 328.3l9.4-.9-3 4.9-9.3 .7z" fill="#2cf"/><path d="M567.4 335.9l9.7-1.7-2.7 1.8-9.5 1z" fill="#17f"/><path d="M712.7 346.1l8.5 0-4.9-1.7-8.4-.1z" fill="#15f"/><path d="M690.6 342.3l8.7 1.4-4.6-1.5-8.6-1.2z" fill="#17f"/><path d="M668.5 334.3l8.9 4.3-4.3-.6-8.7-3.3z" fill="#3bf"/><path d="M646.4 320.8l9 8.4-3.9 2.4-8.9-5.4z" fill="#0ec"/><path d="M624.2 311l9.3 8.1-3.6 7.3-9.1-4.1z" fill="#1e8"/><path d="M602 318.1l9.5 1.1-3.3 8.5-9.3-.3z" fill="#0eb"/><path d="M579.9 330.5l9.6-2.2-2.9 4.7-9.5 1.2z" fill="#3cf"/><path d="M704.1 345.5l8.6 .6-4.8-1.8-8.6-.6z" fill="#16f"/><path d="M681.8 339.6l8.8 2.7-4.5-1.3-8.7-2.4z" fill="#29f"/><path d="M659.5 327l9 7.3-4.1 .4-9-5.5z" fill="#0ef"/><path d="M637.2 308.8l9.2 12-3.8 5.4-9.1-7.1z" fill="#1e7"/><path d="M614.8 304.2l9.4 6.8-3.4 11.3-9.3-3.1z" fill="#1e5"/><path d="M592.5 319.6l9.5-1.5-3.1 9.3-9.4 .9z" fill="#0eb"/><path d="M570.1 333.3l9.8-2.8-2.8 3.7-9.7 1.7z" fill="#2af"/><path d="M717.7 348l8.6 0-5.1-1.9-8.5 0z" fill="#15f"/><path d="M695.3 344l8.8 1.5-4.8-1.8-8.7-1.4z" fill="#17f"/><path d="M672.8 334.6l9 5-4.4-1-8.9-4.3z" fill="#2cf"/><path d="M650.3 315.2l9.2 11.8-4.1 2.2-9-8.4z" fill="#0e9"/><path d="M627.8 293.7l9.4 15.1-3.7 10.3-9.3-8.1z" fill="#2e2"/><path d="M605.3 301.4l9.5 2.8-3.3 15-9.5-1.1z" fill="#2e4"/><path d="M582.7 323.5l9.8-3.9-3 8.7-9.6 2.2z" fill="#0ec"/><path d="M731.6 350l8.6-.3-5.4-1.9-8.5 .2z" fill="#15f"/><path d="M709 347.4l8.7 .6-5-1.9-8.6-.6z" fill="#16f"/><path d="M686.3 341.2l9 2.8-4.7-1.7-8.8-2.7z" fill="#29f"/><path d="M663.7 326l9.1 8.6-4.3-.3-9-7.3z" fill="#0ed"/><path d="M641 296.8l9.3 18.4-3.9 5.6-9.2-12z" fill="#2f3"/><path d="M618.3 279.1l9.5 14.6-3.6 17.3-9.4-6.8z" fill="#5f0"/><path d="M595.5 304.4l9.8-3-3.3 16.7-9.5 1.5z" fill="#2e4"/><path d="M572.8 328.5l9.9-5-2.8 7-9.8 2.8z" fill="#1de"/><path d="M722.9 350l8.7 0-5.3-2-8.6 0z" fill="#15f"/><path d="M700.1 346.1l8.9 1.3-4.9-1.9-8.8-1.5z" fill="#17f"/><path d="M677.2 336l9.1 5.2-4.5-1.6-9-5z" fill="#2cf"/><path d="M654.4 311.4l9.3 14.6-4.2 1-9.2-11.8z" fill="#1e6"/><path d="M631.5 270.5l9.5 26.3-3.8 12-9.4-15.1z" fill="#7f0"/><path d="M608.6 272.5l9.7 6.6-3.5 25.1-9.5-2.8z" fill="#8f0"/><path d="M585.7 311.8l9.8-7.4-3 15.2-9.8 3.9z" fill="#1e5"/><path d="M737 352.1l8.7-.4-5.5-2-8.6 .3z" fill="#15f"/><path d="M714 349.7l8.9 .3-5.2-2-8.7-.6z" fill="#16f"/><path d="M691 343.5l9.1 2.6-4.8-2.1-9-2.8z" fill="#29f"/><path d="M668 327.1l9.2 8.9-4.4-1.4-9.1-8.6z" fill="#0ec"/><path d="M644.9 287.3l9.5 24.1-4.1 3.8-9.3-18.4z" fill="#4f1"/><path d="M621.8 251.3l9.7 19.2-3.7 23.2-9.5-14.6z" fill="#de0"/><path d="M598.7 278.8l9.9-6.3-3.3 28.9-9.8 3z" fill="#8e0"/><path d="M575.6 320.8l10.1-9-3 11.7-9.9 5z" fill="#0e9"/><path d="M506.1 344.6l10.7-1-1.9-1.3-10.5 .8z" fill="#13e"/><path d="M728.2 352.2l8.8-.1-5.4-2.1-8.7 0z" fill="#15f"/><path d="M705 348.6l9 1.1-5-2.3-8.9-1.3z" fill="#17f"/><path d="M681.8 338.7l9.2 4.8-4.7-2.3-9.1-5.2z" fill="#2cf"/><path d="M658.6 311.8l9.4 15.3-4.3-1.1-9.3-14.6z" fill="#1e5"/><path d="M635.3 255.1l9.6 32.2-3.9 9.5-9.5-26.3z" fill="#ce0"/><path d="M612 245.5l9.8 5.8-3.5 27.8-9.7-6.6z" fill="#fb0"/><path d="M588.7 293.8l10-15-3.2 25.6-9.8 7.4z" fill="#5e0"/><path d="M518.7 344.9l10.6-1.5-2.1-.9-10.4 1.1z" fill="#14f"/><path d="M495.3 345.4l10.8-.8-1.7-1.5-10.6 .6z" fill="#13e"/><path d="M742.7 354.2l8.7-.5-5.7-2-8.7 .4z" fill="#15f"/><path d="M719.3 352l8.9 .2-5.3-2.2-8.9-.3z" fill="#15f"/><path d="M695.9 346.4l9.1 2.2-4.9-2.5-9.1-2.6z" fill="#29f"/><path d="M672.4 330.5l9.4 8.2-4.6-2.7-9.2-8.9z" fill="#0ed"/><path d="M649 286.1l9.6 25.7-4.2-.4-9.5-24.1z" fill="#6f0"/><path d="M625.5 238.4l9.8 16.7-3.8 15.4-9.7-19.2z" fill="#f80"/><path d="M602 250.5l10-5-3.4 27-9.9 6.3z" fill="#eb0"/><path d="M578.5 309.9l10.2-16.1-3 18-10.1 9z" fill="#2e2"/><path d="M507.8 346.1l10.9-1.2-1.9-1.3-10.7 1z" fill="#13e"/><path d="M484.2 346l11.1-.6-1.5-1.7-10.9 .6z" fill="#13e"/><path d="M733.8 354.5l8.9-.3-5.7-2.1-8.8 .1z" fill="#15f"/><path d="M710.2 351.3l9.1 .7-5.3-2.3-9-1.1z" fill="#16f"/><path d="M686.5 342.4l9.4 4-4.9-2.9-9.2-4.8z" fill="#3cf"/><path d="M662.9 316.9l9.5 13.6-4.4-3.4-9.4-15.3z" fill="#1e6"/><path d="M639.2 253.3l9.8 32.8-4.1 1.2-9.6-32.2z" fill="#ee0"/><path d="M615.6 232.4l9.9 6-3.7 12.9-9.8-5.8z" fill="#f30"/><path d="M591.8 269.6l10.2-19.1-3.3 28.3-10 15z" fill="#cd0"/><path d="M520.6 346.1l10.8-2-2.1-.7-10.6 1.5z" fill="#14f"/><path d="M496.8 347l11-.9-1.7-1.5-10.8 .8z" fill="#13e"/><path d="M748.5 356.5l8.8-.6-5.9-2.2-8.7 .5z" fill="#15f"/><path d="M724.7 354.6l9.1-.1-5.6-2.3-8.9-.2z" fill="#15f"/><path d="M700.9 349.7l9.3 1.6-5.2-2.7-9.1-2.2z" fill="#28f"/><path d="M677.1 335.8l9.4 6.6-4.7-3.7-9.4-8.2z" fill="#0ee"/><path d="M653.2 295.1l9.7 21.8-4.3-5.1-9.6-25.7z" fill="#5f0"/><path d="M629.3 236.3l9.9 17-3.9 1.8-9.8-16.7z" fill="#f50"/><path d="M605.4 237.4l10.2-5-3.6 13.1-10 5z" fill="#f30"/><path d="M581.5 297.2l10.3-27.6-3.1 24.2-10.2 16.1z" fill="#7e0"/><path d="M509.6 347.6l11-1.5-1.9-1.2-10.9 1.2z" fill="#13e"/><path d="M485.6 347.8l11.2-.8-1.5-1.6-11.1 .6z" fill="#13e"/><path d="M739.5 356.9l9-.4-5.8-2.3-8.9 .3z" fill="#15f"/><path d="M715.5 354.2l9.2 .4-5.4-2.6-9.1-.7z" fill="#16f"/><path d="M691.4 346.8l9.5 2.9-5-3.3-9.4-4z" fill="#2af"/><path d="M667.4 325.4l9.7 10.4-4.7-5.3-9.5-13.6z" fill="#1e8"/><path d="M643.3 262.2l9.9 32.9-4.2-9-9.8-32.8z" fill="#ee0"/><path d="M619.2 230.2l10.1 6.1-3.8 2.1-9.9-6z" fill="#f20"/><path d="M522.6 347.2l11-2.6-2.2-.5-10.8 2z" fill="#15f"/><path d="M498.4 348.8l11.2-1.2-1.8-1.5-11 .9z" fill="#13e"/><path d="M754.5 358.8l9-.7-6.2-2.2-8.8 .6z" fill="#15f"/><path d="M730.3 357.1l9.2-.2-5.7-2.4-9.1 .1z" fill="#15f"/><path d="M706.1 353.1l9.4 1.1-5.3-2.9-9.3-1.6z" fill="#17f"/><path d="M681.8 342l9.6 4.8-4.9-4.4-9.4-6.6z" fill="#1df"/><path d="M657.6 309.9l9.8 15.5-4.5-8.5-9.7-21.8z" fill="#3f2"/><path d="M633.3 245.6l10 16.6-4.1-8.9-9.9-17z" fill="#f60"/><path d="M511.5 349.1l11.1-1.9-2-1.1-11 1.5z" fill="#14f"/><path d="M487 349.7l11.4-.9-1.6-1.8-11.2 .8z" fill="#13e"/><path d="M745.4 359.3l9.1-.5-6-2.3-9 .4z" fill="#15f"/><path d="M721 357.1l9.3 0-5.6-2.5-9.2-.4z" fill="#15f"/><path d="M696.5 351.2l9.6 1.9-5.2-3.4-9.5-2.9z" fill="#29f"/><path d="M672 334.9l9.8 7.1-4.7-6.2-9.7-10.4z" fill="#0eb"/><path d="M647.5 289.4l10.1 20.5-4.4-14.8-9.9-32.9z" fill="#af0"/><path d="M623 239.4l10.3 6.2-4-9.3-10.1-6.1z" fill="#f30"/><path d="M524.7 348.4l11.2-3.3-2.3-.5-11 2.6z" fill="#15f"/><path d="M500.1 350.5l11.4-1.4-1.9-1.5-11.2 1.2z" fill="#13e"/><path d="M760.7 361.1l9.1-.7-6.3-2.3-9 .7z" fill="#15f"/><path d="M736.1 359.8l9.3-.5-5.9-2.4-9.2 .2z" fill="#15f"/><path d="M711.5 356.6l9.5 .5-5.5-2.9-9.4-1.1z" fill="#16f"/><path d="M686.8 348.1l9.7 3.1-5.1-4.4-9.6-4.8z" fill="#3cf"/><path d="M662.1 325.1l9.9 9.8-4.6-9.5-9.8-15.5z" fill="#1f5"/><path d="M637.3 268.4l10.2 21-4.2-27.2-10-16.6z" fill="#fc0"/><path d="M612.6 244.6l10.4-5.2-3.8-9.2-10.3 5z" fill="#f20"/><path d="M538.2 345.9l11.1-5.9-2.5 .3-10.9 4.8z" fill="#29f"/><path d="M513.4 350.7l11.3-2.3-2.1-1.2-11.1 1.9z" fill="#14f"/><path d="M488.5 351.6l11.6-1.1-1.7-1.7-11.4 .9z" fill="#13e"/><path d="M751.5 361.8l9.2-.7-6.2-2.3-9.1 .5z" fill="#15f"/><path d="M726.7 360l9.4-.2-5.8-2.7-9.3 0z" fill="#15f"/><path d="M701.8 355.5l9.7 1.1-5.4-3.5-9.6-1.9z" fill="#17f"/><path d="M676.9 343.7l9.9 4.4-5-6.1-9.8-7.1z" fill="#1ef"/><path d="M651.9 313.6l10.2 11.5-4.5-15.2-10.1-20.5z" fill="#4f1"/><path d="M627 258.3l10.3 10.1-4-22.8-10.3-6.2z" fill="#f70"/><path d="M602 260.9l10.6-16.3-3.7-9.4-10.4 16.7z" fill="#f60"/><path d="M526.9 349.8l11.3-3.9-2.3-.8-11.2 3.3z" fill="#16f"/><path d="M501.8 352.4l11.6-1.7-1.9-1.6-11.4 1.4z" fill="#13e"/><path d="M717 360l9.7 0-5.7-2.9-9.5-.5z" fill="#15f"/><path d="M691.9 353.8l9.9 1.7-5.3-4.3-9.7-3.1z" fill="#29f"/><path d="M666.8 338.1l10.1 5.6-4.9-8.8-9.9-9.8z" fill="#0ea"/><path d="M641.6 303.4l10.3 10.2-4.4-24.2-10.2-21z" fill="#9f0"/><path d="M616.4 267.8l10.6-9.5-4-18.9-10.4 5.2z" fill="#f70"/><path d="M591.2 295.5l10.8-34.6-3.5-9-10.7 34z" fill="#dd0"/><path d="M540.7 347.1l11.2-6.7-2.6-.4-11.1 5.9z" fill="#3bf"/><path d="M515.4 352.5l11.5-2.7-2.2-1.4-11.3 2.3z" fill="#15f"/><path d="M490 353.6l11.8-1.2-1.7-1.9-11.6 1.1z" fill="#13e"/><path d="M707.2 359.6l9.8 .4-5.5-3.4-9.7-1.1z" fill="#16f"/><path d="M681.9 351.4l10 2.4-5.1-5.7-9.9-4.4z" fill="#3cf"/><path d="M656.5 332l10.3 6.1-4.7-13-10.2-11.5z" fill="#1e6"/><path d="M631 299.1l10.6 4.3-4.3-35-10.3-10.1z" fill="#cf0"/><path d="M605.6 289.3l10.8-21.5-3.8-23.2-10.6 16.3z" fill="#fb0"/><path d="M580.1 319.3l11.1-23.8-3.4-9.6-10.8 27.8z" fill="#5f0"/><path d="M529.1 351.5l11.6-4.4-2.5-1.2-11.3 3.9z" fill="#17f"/><path d="M503.6 354.3l11.8-1.8-2-1.8-11.6 1.7z" fill="#14f"/><path d="M697.2 358.8l10 .8-5.4-4.1-9.9-1.7z" fill="#17f"/><path d="M671.6 348.4l10.3 3-5-7.7-10.1-5.6z" fill="#1df"/><path d="M646 327.2l10.5 4.8-4.6-18.4-10.3-10.2z" fill="#2f3"/><path d="M620.3 303.5l10.7-4.4-4-40.8-10.6 9.5z" fill="#cf0"/><path d="M594.6 311.2l11-21.9-3.6-28.4-10.8 34.6z" fill="#9f0"/><path d="M568.9 335l11.2-15.7-3.1-5.6-11.1 17.4z" fill="#1e6"/><path d="M543.2 349.1l11.5-7-2.8-1.7-11.2 6.7z" fill="#3bf"/><path d="M517.4 354.4l11.7-2.9-2.2-1.7-11.5 2.7z" fill="#15f"/><path d="M491.6 355.7l12-1.4-1.8-1.9-11.8 1.2z" fill="#13e"/><path d="M687 357.7l10.2 1.1-5.3-5-10-2.4z" fill="#29f"/><path d="M661.2 345.4l10.4 3-4.8-10.3-10.3-6.1z" fill="#0ec"/><path d="M635.3 325.4l10.7 1.8-4.4-23.8-10.6-4.3z" fill="#3f2"/><path d="M609.4 314.5l10.9-11-3.9-35.7-10.8 21.5z" fill="#8f0"/><path d="M583.4 328.5l11.2-17.3-3.4-15.7-11.1 23.8z" fill="#3e2"/><path d="M557.5 345.2l11.4-10.2-3-3.9-11.2 11z" fill="#0ed"/><path d="M531.5 353.7l11.7-4.6-2.5-2-11.6 4.4z" fill="#17f"/><path d="M505.5 356.5l11.9-2.1-2-1.9-11.8 1.8z" fill="#14f"/><path d="M702.7 363.2l10.2 .1-5.7-3.7-10-.8z" fill="#16f"/><path d="M676.7 356.4l10.3 1.3-5.1-6.3-10.3-3z" fill="#3bf"/><path d="M650.5 343.3l10.7 2.1-4.7-13.4-10.5-4.8z" fill="#0ea"/><path d="M624.4 327.8l10.9-2.4-4.3-26.3-10.7 4.4z" fill="#3f2"/><path d="M598.2 327.4l11.2-12.9-3.8-25.2-11 21.9z" fill="#4f1"/><path d="M572 341l11.4-12.5-3.3-9.2-11.2 15.7z" fill="#1e8"/><path d="M545.8 351.9l11.7-6.7-2.8-3.1-11.5 7z" fill="#3bf"/><path d="M519.5 356.7l12-3-2.4-2.2-11.7 2.9z" fill="#15f"/><path d="M493.3 358l12.2-1.5-1.9-2.2-12 1.4z" fill="#13e"/><path d="M692.4 363l10.3 .2-5.5-4.4-10.2-1.1z" fill="#17f"/><path d="M666.1 355.2l10.6 1.2-5.1-8-10.4-3z" fill="#2cf"/><path d="M639.7 342.8l10.8 .5-4.5-16.1-10.7-1.8z" fill="#1e8"/><path d="M613.3 333.8l11.1-6-4.1-24.3-10.9 11z" fill="#2f3"/><path d="M586.8 338.8l11.4-11.4-3.6-16.2-11.2 17.3z" fill="#1e6"/><path d="M560.4 349.5l11.6-8.5-3.1-6-11.4 10.2z" fill="#1de"/><path d="M533.9 356.3l11.9-4.4-2.6-2.8-11.7 4.6z" fill="#17f"/><path d="M507.4 358.8l12.1-2.1-2.1-2.3-11.9 2.1z" fill="#14f"/><path d="M681.9 362.7l10.5 .3-5.4-5.3-10.3-1.3z" fill="#28f"/><path d="M655.3 354.5l10.8 .7-4.9-9.8-10.7-2.1z" fill="#1df"/><path d="M628.6 344.4l11.1-1.6-4.4-17.4-10.9 2.4z" fill="#1e8"/><path d="M601.9 341.2l11.4-7.4-3.9-19.3-11.2 12.9z" fill="#1e6"/><path d="M575.2 347.9l11.6-9.1-3.4-10.3-11.4 12.5z" fill="#0ec"/><path d="M548.5 355.3l11.9-5.8-2.9-4.3-11.7 6.7z" fill="#2af"/><path d="M521.8 359.2l12.1-2.9-2.4-2.6-12 3z" fill="#15f"/><path d="M495 360.4l12.4-1.6-1.9-2.3-12.2 1.5z" fill="#13e"/><path d="M671.1 362.5l10.8 .2-5.2-6.3-10.6-1.2z" fill="#29f"/><path d="M644.3 354.7l11-.2-4.8-11.2-10.8-.5z" fill="#1df"/><path d="M617.3 347.8l11.3-3.4-4.2-16.6-11.1 6z" fill="#0ea"/><path d="M590.4 348.5l11.5-7.3-3.7-13.8-11.4 11.4z" fill="#0eb"/><path d="M563.4 354.5l11.8-6.6-3.2-6.9-11.6 8.5z" fill="#2cf"/><path d="M536.4 359.3l12.1-4-2.7-3.4-11.9 4.4z" fill="#17f"/><path d="M509.4 361.3l12.4-2.1-2.3-2.5-12.1 2.1z" fill="#14f"/><path d="M660.2 362.7l10.9-.2-5-7.3-10.8-.7z" fill="#29f"/><path d="M633 355.8l11.3-1.1-4.6-11.9-11.1 1.6z" fill="#1df"/><path d="M605.8 352.3l11.5-4.5-4-14-11.4 7.4z" fill="#0ed"/><path d="M578.6 354.8l11.8-6.3-3.6-9.7-11.6 9.1z" fill="#1df"/><path d="M551.3 359.3l12.1-4.8-3-5-11.9 5.8z" fill="#29f"/><path d="M524.1 362.1l12.3-2.8-2.5-3-12.1 2.9z" fill="#15f"/><path d="M496.8 362.9l12.6-1.6-2-2.5-12.4 1.6z" fill="#13e"/><path d="M649 363.2l11.2-.5-4.9-8.2-11 .2z" fill="#2af"/><path d="M621.6 358l11.4-2.2-4.4-11.4-11.3 3.4z" fill="#1df"/><path d="M594.1 356.9l11.7-4.6-3.9-11.1-11.5 7.3z" fill="#1df"/><path d="M566.6 359.7l12-4.9-3.4-6.9-11.8 6.6z" fill="#2af"/><path d="M539 362.7l12.3-3.4-2.8-4-12.1 4z" fill="#16f"/><path d="M511.5 364.1l12.6-2-2.3-2.9-12.4 2.1z" fill="#14f"/><path d="M637.6 364.1l11.4-.9-4.7-8.5-11.3 1.1z" fill="#2af"/><path d="M609.9 360.9l11.7-2.9-4.3-10.2-11.5 4.5z" fill="#2cf"/><path d="M582.1 361.2l12-4.3-3.7-8.4-11.8 6.3z" fill="#3bf"/><path d="M554.3 363.4l12.3-3.7-3.2-5.2-12.1 4.8z" fill="#17f"/><path d="M526.5 365.2l12.5-2.5-2.6-3.4-12.3 2.8z" fill="#14f"/><path d="M498.6 365.6l12.9-1.5-2.1-2.8-12.6 1.6z" fill="#13e"/><path d="M625.9 365.7l11.7-1.6-4.6-8.3-11.4 2.2z" fill="#29f"/><path d="M597.9 363.9l12-3-4.1-8.6-11.7 4.6z" fill="#2af"/><path d="M569.8 364.7l12.3-3.5-3.5-6.4-12 4.9z" fill="#28f"/><path d="M541.8 366.3l12.5-2.9-3-4.1-12.3 3.4z" fill="#15f"/><path d="M513.6 367l12.9-1.8-2.4-3.1-12.6 2z" fill="#14f"/><path d="M614.1 367.7l11.8-2-4.3-7.7-11.7 2.9z" fill="#28f"/><path d="M585.7 366.9l12.2-3-3.8-7-12 4.3z" fill="#28f"/><path d="M557.4 367.6l12.4-2.9-3.2-5-12.3 3.7z" fill="#16f"/><path d="M529 368.4l12.8-2.1-2.8-3.6-12.5 2.5z" fill="#14f"/><path d="M500.5 368.5l13.1-1.5-2.1-2.9-12.9 1.5z" fill="#13e"/><path d="M573.3 369.5l12.4-2.6-3.6-5.7-12.3 3.5z" fill="#16f"/><path d="M544.6 369.9l12.8-2.3-3.1-4.2-12.5 2.9z" fill="#14f"/><path d="M515.9 370.1l13.1-1.7-2.5-3.2-12.9 1.8z" fill="#13e"/><path d="M560.5 371.7l12.8-2.2-3.5-4.8-12.4 2.9z" fill="#15f"/><path d="M531.6 371.8l13-1.9-2.8-3.6-12.8 2.1z" fill="#14f"/><path d="M502.5 371.5l13.4-1.4-2.3-3.1-13.1 1.5z" fill="#13e"/><path d="M547.6 373.7l12.9-2-3.1-4.1-12.8 2.3z" fill="#14f"/><path d="M518.2 373.4l13.4-1.6-2.6-3.4-13.1 1.7z" fill="#13e"/><path d="M563.9 375.8l12.9-1.9-3.5-4.4-12.8 2.2z" fill="#14f"/><path d="M534.3 375.3l13.3-1.6-3-3.8-13 1.9z" fill="#13e"/><path d="M504.6 374.7l13.6-1.3-2.3-3.3-13.4 1.4z" fill="#13e"/><path d="M550.6 377.4l13.3-1.6-3.4-4.1-12.9 2z" fill="#13e"/><path d="M520.7 376.7l13.6-1.4-2.7-3.5-13.4 1.6z" fill="#13e"/><path d="M537.1 378.8l13.5-1.4-3-3.7-13.3 1.6z" fill="#13e"/><path d="M506.8 378l13.9-1.3-2.5-3.3-13.6 1.3z" fill="#13e"/><path d="M523.3 380.1l13.8-1.3-2.8-3.5-13.6 1.4z" fill="#13e"/><path d="M509.1 381.4l14.2-1.3-2.6-3.4-13.9 1.3z" fill="#13e"/></g></g><path d="M470 330H566L570 338.6L604 357V395H470Z" fill="url(#hxaL)"/><path d="M672 330H780V370H672Z" fill="url(#hxaR)" opacity="0.6"/><path d="M509.1 381.4l-2.3-3.4-2.2-3.3-2.1-3.2-2-3-1.9-2.9-1.8-2.7-1.8-2.5-1.7-2.4-1.7-2.3-1.6-2.1-1.5-2-1.5-1.9-1.4-1.9-1.4-1.8-1.3-1.7M523.3 380.1l-2.6-3.4-2.5-3.3-2.3-3.3-2.3-3.1-2.1-2.9-2.1-2.8-2-2.5-1.9-2.3-1.9-2.2-1.8-1.9-1.7-1.9-1.7-1.7-1.6-1.8-1.5-1.6-1.5-1.7M537.1 378.8l-2.8-3.5-2.7-3.5-2.6-3.4-2.5-3.2-2.4-3.1-2.3-2.9-2.3-2.5-2.1-2.3-2-1.9-2-1.8-1.9-1.6-1.9-1.5-1.8-1.5-1.7-1.5-1.7-1.5M549.9 376.4l-2.3-2.7-3-3.8-2.8-3.6-2.8-3.6-2.6-3.4-2.5-3-2.4-2.6-2.4-2.2-2.2-1.7-2.2-1.4-2.1-1.2-2-1.1-1.9-1.2-1.7-1.1M560.5 371.7l-3.1-4.1-3.1-4.2-3-4.1-2.8-4-2.7-3.4-2.6-2.8-2.5-2-2.5-1.2-.9-.4M571.1 366.5l-1.3-1.8-3.2-5-3.2-5.2-3-5-2.9-4.3-2.5-2.8M581.6 360.4l-3-5.6-3.4-6.9-3.2-6.9-1.9-3.9M594.1 356.9l-3.7-8.4-3.6-9.7-3.4-10.3-3.3-9.2-1.9-4.1M608.3 357.9l-2.5-5.6-3.9-11.1-3.7-13.8-3.6-16.2-3.4-15.7-2.5-8.1M622.1 359.1l-.5-1.1-4.3-10.2-4-14-3.9-19.3-3.8-25.2-3.6-28.4-.5-3.3M635.9 361.3l-2.9-5.5-4.4-11.4-4.2-16.6-4.1-24.3-3.9-35.7-3.8-23.2-2.3-7.3M646.6 359.3l-2.3-4.6-4.6-11.9-4.4-17.4-4.3-26.3-4-40.8-4-18.9-1.4-4.8M658.9 360.8l-3.6-6.3-4.8-11.2-4.5-16.1-4.4-23.8-1.6-11.6M638.9 283l-1.6-14.6M635.3 254.6l-2-9-1.5-4.9M669.2 360l-3.1-4.8-4.9-9.8-4.7-13.4-4-15.8M651.4 310.9l-3.9-21.5-2.6-17.1M679.2 359.7l-2.5-3.3-5.1-8-3.6-7.5M666.8 338.1l-1.8-4.6M663.8 330.3l-1.7-5.2-1.2-3.7M659.8 317.7l-2.2-7.8-.6-2M688.4 359.1l-1.4-1.4-5.1-6.3-4.4-6.6M676.2 342.7l-4.2-7.8M669.7 330.1l-1.7-3.5M697.2 358.8l-5.3-5-5.1-5.7-3.8-4.5M680.6 340.4l-3.5-4.6M705.8 358.6l-4-3.1-5.3-4.3-5.1-4.4-4.9-4.4-.6-.5M713.5 357.9l-2-1.3-5.4-3.5-5.2-3.4-5-3.3-4.9-2.9-4.7-2.3-.6-.2M721.7 357.4l-.7-.3-5.5-2.9-5.3-2.9-5.2-2.7-4.9-2.5-4.8-2.1-4.7-1.7-4.5-1.3-1.1-.3M730.3 357.1l-5.6-2.5-5.4-2.6-5.3-2.3-5-2.3-4.9-1.9-4.8-1.8-4.6-1.5-4.4-1.3-4.4-1.3-4.2-1.2M740.9 357.5l-1.4-.6-5.7-2.4-5.6-2.3-5.3-2.2-5.2-2-5-1.9-4.8-1.8-4.7-1.6-4.6-1.5-4.4-1.4-4.3-1.3-.5-.2M680.2 335.4l-2.4-.8M760.7 361.1l-6.2-2.3-6-2.3-5.8-2.3-5.7-2.1-5.4-2.1-4.6-1.7M509.1 381.4l14.2-1.3 13.8-1.3 6.8-.7M757.3 361.4l3.4-.3 5.7-.4M506.8 378l13.9-1.3 13.6-1.4 13.3-1.6 12.9-2M614.3 359.7l7.3-1.7 11.4-2.2 11.3-1.1 11-.2 10.8 .7 10.6 1.2 10.3 1.3 10.2 1.1 2.5 .2M750 359.1l4.5-.3 4.5-.4M504.6 374.7l13.6-1.3 13.4-1.6 13-1.9 12.8-2.3 12.4-2.9 10.8-3.1M594.1 356.9l11.7-4.6 11.5-4.5 11.3-3.4 11.1-1.6 10.8 .5 10.7 2.1 10.4 3 10.3 3 10 2.4 9.9 1.7 9.7 1.1 9.5 .5 9.3 0 9.2-.2 9-.4 4.4-.3M502.5 371.5l13.4-1.4 13.1-1.7 12.8-2.1 12.5-2.9 12.3-3.7 12-4.9 11.8-6.3 11.5-7.3 11.4-7.4 11.1-6 10.9-2.4 10.7 1.8 10.5 4.8 10.3 6.1 8.8 5M678.1 344.4l8.7 3.7 9.7 3.1 9.6 1.9 9.4 1.1 9.2 .4 9.1-.1 8.9-.3 4.4-.2M500.5 368.5l13.1-1.5 12.9-1.8 12.5-2.5 12.3-3.4 12.1-4.8 11.8-6.6 11.6-9.1 11.4-11.4 11.2-12.9 10.9-11 10.7-4.4 10.6 4.3 2.6 2.1M646.8 308l3.8 4.1M653.2 315l3.8 4.4M659.6 322.3l2.5 2.8M664.6 327.7l7.4 7.2 6.2 4.7M680.6 341.2l1.2 .8 1.2 .7M685.5 344l5.9 2.8 9.5 2.9 9.3 1.6 9.1 .7 8.9 .2 8.8-.1 4.4-.2M498.6 365.6l12.9-1.5 12.6-2 12.3-2.8 12.1-4 11.9-5.8 11.6-8.5 11.4-12.5 11.2-17.3 11-21.9 10.8-21.5 10.6-9.5 5.2 2.9M634.8 264.3l2.5 4.1 1.3 2.3M641.2 275.7l6.3 13.7 10.1 20.5 2.4 4.4M677.1 335.8l3.5 2.9M683 340.3l3.5 2.1 9.4 4 9.1 2.2 9 1.1 8.9 .3 8.7 0 2.2-.1M496.8 362.9l12.6-1.6 12.4-2.1 12.1-2.9 11.9-4.4 11.7-6.7 7.1-5.8M573.2 329.9l6.9-10.6 11.1-23.8 10.8-34.6 1.3-5.1M606 253.9l6.6-9.3 10.4-5.2 7.7 3.6M633.3 245.6l6.3 9.4M645.8 271.6l1.2 4.4M684.1 340.2l6.9 3.3 9.1 2.6 8.9 1.3 8.7 .6 7.6 0M495 360.4l12.4-1.6 12.1-2.1 12-3 11.7-4.6 8.6-5M684.1 340.2l2.2 1 9 2.8 8.8 1.5 8.6 .6 5.4 .1M493.3 358l12.2-1.5 11.9-2.1 11.7-2.9 11.6-4.4 2.8-1.4M686.2 341.2l4.4 1.1 8.7 1.4 8.6 .6 3.1 .1M491.6 355.7l12-1.4 11.8-1.8 11.5-2.7 11.3-3.9M686.1 341l8.6 1.2 8.5 .5 2.1 0M490 353.6l11.8-1.2 11.6-1.7 11.3-2.3 9.8-2.8M685 340.3l5.3 .6 8.3 .3 1.1 0M488.5 351.6l11.6-1.1 11.4-1.4 11.1-1.9 6.9-1.5M683.8 339.5l2.1 .1 8.3 .2M487 349.7l11.4-.9 11.2-1.2 11-1.5 5.4-1M681.7 338.4l8.2 .1M485.6 347.8l11.2-.8 11-.9 10.9-1.2 2.6-.4M680.7 337.3l4.1-.1M484.2 346l11.1-.6 10.8-.8 9.3-.8M482.9 344.3l10.9-.6 10.6-.6 4-.3" fill="none" stroke="#002818" stroke-opacity="0.2" stroke-width="0.6"/></g></svg><span class="t" style="left:472.5px;top:343.8px;font-size:8.1px;color:#4ad8d8;transform:scaleX(1.017);-webkit-text-stroke:0.12px currentColor;">P</span><span class="t" style="left:479.0px;top:352.8px;font-size:8.1px;color:#4ad8d8;transform:scaleX(1.107);-webkit-text-stroke:0.12px currentColor;">L</span><span class="t" style="left:485.0px;top:363.2px;font-size:8.1px;color:#4ad8d8;transform:scaleX(1.024);-webkit-text-stroke:0.12px currentColor;">H</span><span class="t" style="left:491.5px;top:374.1px;font-size:8.1px;color:#4ad8d8;transform:scaleX(1.109);-webkit-text-stroke:0.12px currentColor;">D</span><span class="t" style="left:498.0px;top:384.2px;font-size:8.1px;color:#4ad8d8;transform:scaleX(1.202);-webkit-text-stroke:0.12px currentColor;">A</span><span class="t" style="left:516.5px;top:388.2px;font-size:8.1px;color:#4ad8d8;-webkit-text-stroke:0.12px currentColor;">1</span><span class="t" style="left:558.0px;top:384.1px;font-size:8.1px;color:#4ad8d8;transform:scaleX(1.218);-webkit-text-stroke:0.12px currentColor;">4</span><span class="t" style="left:609.0px;top:379.8px;font-size:8.1px;color:#4ad8d8;transform:scaleX(1.218);-webkit-text-stroke:0.12px currentColor;">8</span><span class="t" style="left:656.8px;top:376.1px;font-size:8.1px;color:#4ad8d8;transform:scaleX(1.187);-webkit-text-stroke:0.12px currentColor;">12</span><span class="t" style="left:699.0px;top:371.6px;font-size:8.1px;color:#4ad8d8;transform:scaleX(1.220);-webkit-text-stroke:0.12px currentColor;">16</span><span class="t" style="left:740.0px;top:368.2px;font-size:8.1px;color:#4ad8d8;transform:scaleX(1.276);-webkit-text-stroke:0.12px currentColor;">20</span><span class="t" style="left:778.5px;top:364.4px;font-size:8.1px;color:#4ad8d8;transform:scaleX(1.276);-webkit-text-stroke:0.12px currentColor;">24</span><span class="t" style="left:748.6px;top:344.8px;font-size:8.1px;color:#90c040;transform:scaleX(1.186);-webkit-text-stroke:0.12px currentColor;">y</span>
<svg class="abs" style="left:952px;top:134px" width="648" height="327" viewBox="952 134 648 327"><path d="M1131.2 357.7L1226.4 316.0M1138.9 359.8L1233.3 317.3M1146.9 362.0L1240.2 318.6M1154.9 364.2L1247.3 319.9M1163.2 366.4L1254.6 321.3M1171.7 368.7L1261.9 322.7M1180.3 371.1L1269.4 324.1M1189.2 373.5L1277.0 325.5M1198.3 375.9L1284.8 327.0M1207.5 378.5L1292.7 328.5M1217.1 381.0L1300.7 330.0M1226.8 383.7L1308.9 331.5M1236.8 386.4L1317.2 333.1M1247.0 389.2L1325.7 334.7M1257.5 392.0L1334.4 336.3M1268.3 395.0L1343.3 338.0M1279.3 398.0L1352.3 339.7M1290.7 401.1L1361.4 341.4M1302.3 404.2L1370.8 343.1M1314.2 407.5L1380.4 344.9M1326.5 410.8L1390.1 346.8M1339.2 414.2L1400.1 348.6M1352.1 417.8L1410.2 350.6M1365.5 421.4L1420.6 352.5M1131.2 357.7L1365.5 421.4M1139.2 354.2L1370.4 415.3M1146.8 350.9L1375.1 409.4M1154.2 347.6L1379.5 403.8M1161.4 344.5L1383.8 398.5M1168.3 341.5L1387.9 393.4M1175.0 338.5L1391.8 388.5M1181.4 335.7L1395.5 383.9M1187.7 333.0L1399.1 379.4M1193.7 330.3L1402.5 375.1M1199.6 327.7L1405.9 370.9M1205.3 325.2L1409.0 367.0M1210.8 322.8L1412.1 363.1M1216.2 320.5L1415.0 359.5M1221.4 318.2L1417.9 355.9M1226.4 316.0L1420.6 352.5" stroke="#3d9fd0" stroke-width="0.8" fill="none" opacity="0.78"/><path d="M1131.2 357.7 L1365.5 421.4 L1420.6 352.5 L1226.4 316Z" stroke="#48bce0" stroke-width="0.9" fill="none" opacity="0.9"/><path d="M1216 345.6 L1413 388.2" stroke="#98d450" stroke-width="0.9" fill="none"/><path d="M1409 385.4 l5.6 3 l-6.4 0.4z" fill="#98d450"/><path d="M1229.5 389.8 L1268 365" stroke="#f07060" stroke-width="0.9" fill="none"/><defs><linearGradient id="hyaM" gradientUnits="userSpaceOnUse" x1="0" y1="239" x2="0" y2="421"><stop offset="0.000" stop-color="#ff1c00"/><stop offset="0.044" stop-color="#ff3400"/><stop offset="0.093" stop-color="#ff6000"/><stop offset="0.143" stop-color="#ff9400"/><stop offset="0.192" stop-color="#fcc800"/><stop offset="0.231" stop-color="#f0ec00"/><stop offset="0.280" stop-color="#c4ff00"/><stop offset="0.335" stop-color="#88ff00"/><stop offset="0.390" stop-color="#50ff00"/><stop offset="0.445" stop-color="#20f818"/><stop offset="0.500" stop-color="#08f458"/><stop offset="0.544" stop-color="#00f0a8"/><stop offset="0.588" stop-color="#00f0f0"/><stop offset="0.643" stop-color="#18c8ff"/><stop offset="0.698" stop-color="#1898ff"/><stop offset="0.775" stop-color="#1070ff"/><stop offset="1.000" stop-color="#0838f8"/></linearGradient><linearGradient id="hyaL" gradientUnits="userSpaceOnUse" x1="1175" y1="331" x2="1195" y2="347.5"><stop offset="0.000" stop-color="#0a30ec" stop-opacity="1"/><stop offset="0.300" stop-color="#0a3cf4" stop-opacity="1"/><stop offset="0.550" stop-color="#0e5cff" stop-opacity="0.95"/><stop offset="0.800" stop-color="#1c98ff" stop-opacity="0.6"/><stop offset="1.000" stop-color="#24d0ff" stop-opacity="0"/></linearGradient><linearGradient id="hyaMg" gradientUnits="userSpaceOnUse" x1="0" y1="290" x2="0" y2="430"><stop offset="0.000" stop-color="#fff" stop-opacity="0.2"/><stop offset="0.229" stop-color="#fff" stop-opacity="0.5"/><stop offset="0.400" stop-color="#fff" stop-opacity="1"/><stop offset="1.000" stop-color="#fff" stop-opacity="1"/></linearGradient><mask id="hyaMask" maskUnits="userSpaceOnUse" x="1110" y="220" width="330" height="220"><rect x="1110" y="220" width="330" height="220" fill="url(#hyaMg)"/></mask><clipPath id="hyaC"><path d="M1131 356.7 L1145.1 352.2 L1160.2 347.1 L1176.2 341.1 L1190.3 333.1 L1200.4 327 L1205.4 324 L1212.4 317 L1225.5 294.3 L1232.5 277.2 L1242.5 260.1 L1251.6 239.5 L1253 240.6 L1262 240 L1268 238.8 L1275 240 L1285 239.6 L1292 239.8 L1295 238.3 L1297 241 L1300.6 244.6 L1316.2 266.2 L1321.2 278.2 L1329.2 294.3 L1344.3 317 L1349.3 322 L1356.3 330.1 L1365.4 336.1 L1380.4 340.6 L1400.5 345.6 L1420.6 349.6 L1419.6 354.2 L1405.6 367.2 L1393.5 381.3 L1388.7 390.1 L1375.6 406.2 L1364.5 421.2 L1355.5 419.2 L1340.4 415.2 L1325.4 408.2 L1310.3 399.1 L1296.2 390.1 L1285.2 380 L1275.2 370 L1268.7 366.2 L1262.6 361.2 L1254.6 353.7 L1245.6 349.1 L1236.5 340.6 L1228.5 344.6 L1221.4 343.6 L1216.4 342.6 L1208.4 350.1 L1197.3 350.1 L1184.3 355.7 L1174.2 359.7 L1164.2 359.2 L1145.1 358.2 L1131 357.8Z"/></clipPath><filter id="blur3" x="-5%" y="-5%" width="110%" height="110%"><feGaussianBlur stdDeviation="2.2 4"/></filter></defs><path d="M1131 356.7 L1145.1 352.2 L1160.2 347.1 L1176.2 341.1 L1190.3 333.1 L1200.4 327 L1205.4 324 L1212.4 317 L1225.5 294.3 L1232.5 277.2 L1242.5 260.1 L1251.6 239.5 L1253 240.6 L1262 240 L1268 238.8 L1275 240 L1285 239.6 L1292 239.8 L1295 238.3 L1297 241 L1300.6 244.6 L1316.2 266.2 L1321.2 278.2 L1329.2 294.3 L1344.3 317 L1349.3 322 L1356.3 330.1 L1365.4 336.1 L1380.4 340.6 L1400.5 345.6 L1420.6 349.6 L1419.6 354.2 L1405.6 367.2 L1393.5 381.3 L1388.7 390.1 L1375.6 406.2 L1364.5 421.2 L1355.5 419.2 L1340.4 415.2 L1325.4 408.2 L1310.3 399.1 L1296.2 390.1 L1285.2 380 L1275.2 370 L1268.7 366.2 L1262.6 361.2 L1254.6 353.7 L1245.6 349.1 L1236.5 340.6 L1228.5 344.6 L1221.4 343.6 L1216.4 342.6 L1208.4 350.1 L1197.3 350.1 L1184.3 355.7 L1174.2 359.7 L1164.2 359.2 L1145.1 358.2 L1131 357.8Z" fill="url(#hyaM)"/><g clip-path="url(#hyaC)"><g mask="url(#hyaMask)"><g filter="url(#blur3)"><path d="M1221.4 315.5l6.9 .8 5-2-6.9-.9z" fill="#13e"/><path d="M1228.3 316.3l7 .6 4.9-1.9-6.9-.7z" fill="#13e"/><path d="M1216.2 317.7l6.9 .8 5.2-2.2-6.9-.8z" fill="#13e"/><path d="M1235.3 316.9l7.2 .3 4.8-1.8-7.1-.4z" fill="#13e"/><path d="M1223.1 318.5l7.1 .5 5.1-2.1-7-.6z" fill="#13e"/><path d="M1242.5 317.2l7.3-.2 4.8-1.4-7.3-.2z" fill="#13e"/><path d="M1210.8 320l7 .8 5.3-2.3-6.9-.8z" fill="#13e"/><path d="M1230.2 319l7.3 0 5-1.8-7.2-.3z" fill="#13e"/><path d="M1249.8 317l7.4-.7 4.7-.9-7.3 .2z" fill="#14f"/><path d="M1217.8 320.8l7.2 .4 5.2-2.2-7.1-.5z" fill="#13e"/><path d="M1237.5 319l7.3-.5 5-1.5-7.3 .2z" fill="#14f"/><path d="M1257.2 316.3l7.5-1.2 4.7-.1-7.5 .4z" fill="#16f"/><path d="M1205.3 322.4l7.1 .8 5.4-2.4-7-.8z" fill="#13e"/><path d="M1225 321.2l7.3-.2 5.2-2-7.3 0z" fill="#13e"/><path d="M1244.8 318.5l7.5-1.4 4.9-.8-7.4 .7z" fill="#15f"/><path d="M1264.7 315.1l7.7-1.5 4.6 .8-7.6 .6z" fill="#29f"/><path d="M1212.4 323.2l7.2 .4 5.4-2.4-7.2-.4z" fill="#13e"/><path d="M1232.3 321l7.4-1 5.1-1.5-7.3 .5z" fill="#14f"/><path d="M1252.3 317.1l7.6-2.2 4.8 .2-7.5 1.2z" fill="#28f"/><path d="M1199.6 324.9l7.2 .9 5.6-2.6-7.1-.8z" fill="#13e"/><path d="M1272.4 313.6l7.9-1.7 4.5 1.9-7.8 .6z" fill="#3bf"/><path d="M1219.6 323.6l7.4-.3 5.3-2.3-7.3 .2z" fill="#13e"/><path d="M1239.7 320l7.6-2.1 5-.8-7.5 1.4z" fill="#17f"/><path d="M1259.9 314.9l7.8-3 4.7 1.7-7.7 1.5z" fill="#3cf"/><path d="M1206.8 325.8l7.3 .4 5.5-2.6-7.2-.4z" fill="#13e"/><path d="M1280.3 311.9l8-1.1 4.4 2.9-7.9 .1z" fill="#2df"/><path d="M1227 323.3l7.5-1.4 5.2-1.9-7.4 1z" fill="#14f"/><path d="M1247.3 317.9l7.7-3.5 4.9 .5-7.6 2.2z" fill="#3bf"/><path d="M1193.7 327.5l7.3 1 5.8-2.7-7.2-.9z" fill="#13e"/><path d="M1267.7 311.9l7.9-3.3 4.7 3.3-7.9 1.7z" fill="#1ef"/><path d="M1214.1 326.2l7.4-.4 5.5-2.5-7.4 .3z" fill="#13e"/><path d="M1288.3 310.8l8.1-.4 4.3 3.6-8-.3z" fill="#1de"/><path d="M1234.5 321.9l7.6-2.9 5.2-1.1-7.6 2.1z" fill="#28f"/><path d="M1255 314.4l7.8-4.9 4.9 2.4-7.8 3z" fill="#1df"/><path d="M1201 328.5l7.3 .4 5.8-2.7-7.3-.4z" fill="#13e"/><path d="M1275.6 308.6l8.1-2.8 4.6 5-8 1.1z" fill="#0ec"/><path d="M1221.5 325.8l7.5-1.6 5.5-2.3-7.5 1.4z" fill="#15f"/><path d="M1296.4 310.4l8.3 .6 4.2 3.9-8.2-.9z" fill="#0ee"/><path d="M1242.1 319l7.8-5.1 5.1 .5-7.7 3.5z" fill="#2cf"/><path d="M1187.7 330.2l7.3 1.1 6-2.8-7.3-1z" fill="#13e"/><path d="M1262.8 309.5l8-5.8 4.8 4.9-7.9 3.3z" fill="#0ea"/><path d="M1208.3 328.9l7.5-.3 5.7-2.8-7.4 .4z" fill="#13e"/><path d="M1283.7 305.8l8.2-1.6 4.5 6.2-8.1 .4z" fill="#0e9"/><path d="M1229 324.2l7.7-3.6 5.4-1.6-7.6 2.9z" fill="#29f"/><path d="M1304.7 311l8.4 1.1 4.1 3.9-8.3-1.1z" fill="#0ee"/><path d="M1249.9 313.9l7.9-7.4 5 3-7.8 4.9z" fill="#0ec"/><path d="M1195 331.3l7.4 .6 5.9-3-7.3-.4z" fill="#13e"/><path d="M1270.8 303.7l8.2-5.7 4.7 7.8-8.1 2.8z" fill="#1e6"/><path d="M1215.8 328.6l7.6-1.6 5.6-2.8-7.5 1.6z" fill="#15f"/><path d="M1291.9 304.2l8.4-.1 4.4 6.9-8.3-.6z" fill="#1e8"/><path d="M1236.7 320.6l7.9-6.6 5.3-.1-7.8 5.1z" fill="#1df"/><path d="M1181.4 333l7.4 1.2 6.2-2.9-7.3-1.1z" fill="#13e"/><path d="M1313.1 312.1l8.6 2 4 3.6-8.5-1.7z" fill="#0ee"/><path d="M1257.8 306.5l8.1-9.5 4.9 6.7-8 5.8z" fill="#1e6"/><path d="M1202.4 331.9l7.5-.1 5.9-3.2-7.5 .3z" fill="#13e"/><path d="M1279 298l8.3-3.8 4.6 10-8.2 1.6z" fill="#2e4"/><path d="M1223.4 327l7.8-4 5.5-2.4-7.7 3.6z" fill="#29f"/><path d="M1300.3 304.1l8.5 1.1 4.3 6.9-8.4-1.1z" fill="#1e8"/><path d="M1244.6 314l8-10.5 5.2 3-7.9 7.4z" fill="#1e9"/><path d="M1188.8 334.2l7.4 .8 6.2-3.1-7.4-.6z" fill="#13e"/><path d="M1321.7 314.1l8.8 2.9 3.9 2.9-8.7-2.2z" fill="#0ee"/><path d="M1265.9 297l8.2-10.1 4.9 11.1-8.2 5.7z" fill="#3f2"/><path d="M1209.9 331.8l7.7-1.5 5.8-3.3-7.6 1.6z" fill="#14f"/><path d="M1287.3 294.2l8.5-1.1 4.5 11-8.4 .1z" fill="#2e2"/><path d="M1231.2 323l7.9-7.8 5.5-1.2-7.9 6.6z" fill="#0ef"/><path d="M1175 335.8l7.4 1.2 6.4-2.8-7.4-1.2z" fill="#13e"/><path d="M1308.8 305.2l8.7 2.6 4.2 6.3-8.6-2z" fill="#1e8"/><path d="M1252.6 303.5l8.2-14.6 5.1 8.1-8.1 9.5z" fill="#3f2"/><path d="M1196.2 335l7.7 .1 6-3.3-7.5 .1z" fill="#13e"/><path d="M1330.5 317l8.9 3.6 3.9 2.1-8.9-2.8z" fill="#1df"/><path d="M1274.1 286.9l8.4-7.9 4.8 15.2-8.3 3.8z" fill="#6f0"/><path d="M1217.6 330.3l7.9-3.9 5.7-3.4-7.8 4z" fill="#28f"/><path d="M1295.8 293.1l8.6 1 4.4 11.1-8.5-1.1z" fill="#3e2"/><path d="M1239.1 315.2l8.1-13.4 5.4 1.7-8 10.5z" fill="#1e6"/><path d="M1182.4 337l7.5 .9 6.3-2.9-7.4-.8z" fill="#13e"/><path d="M1317.5 307.8l8.9 4.2 4.1 5-8.8-2.9z" fill="#0e9"/><path d="M1260.8 288.9l8.3-17 5 15-8.2 10.1z" fill="#7f0"/><path d="M1203.9 335.1l7.7-1.2 6-3.6-7.7 1.5z" fill="#14f"/><path d="M1339.4 320.6l9.2 4 3.7 1.1-9-3z" fill="#2cf"/><path d="M1282.5 279l8.6-3.2 4.7 17.3-8.5 1.1z" fill="#7f0"/><path d="M1225.5 326.4l8-8.2 5.6-3-7.9 7.8z" fill="#0ef"/><path d="M1304.4 294.1l8.8 3.9 4.3 9.8-8.7-2.6z" fill="#2e2"/><path d="M1247.2 301.8l8.3-20.9 5.3 8-8.2 14.6z" fill="#5f0"/><path d="M1189.9 337.9l7.7 .2 6.3-3-7.7-.1z" fill="#13e"/><path d="M1326.4 312l9.1 5 3.9 3.6-8.9-3.6z" fill="#0eb"/><path d="M1269.1 271.9l8.5-15 4.9 22.1-8.4 7.9z" fill="#ce0"/><path d="M1211.6 333.9l8-3.5 5.9-4-7.9 3.9z" fill="#28f"/><path d="M1348.6 324.6l9.3 4 3.5 .2-9.1-3.1z" fill="#3bf"/><path d="M1291.1 275.8l8.7 1.1 4.6 17.2-8.6-1z" fill="#8e0"/><path d="M1233.5 318.2l8.2-15.4 5.5-1-8.1 13.4z" fill="#1e6"/><path d="M1175.7 340.1l7.7 1 6.5-3.2-7.5-.9z" fill="#13e"/><path d="M1313.2 298l9 6.1 4.2 7.9-8.9-4.2z" fill="#2e3"/><path d="M1255.5 280.9l8.4-27.6 5.2 18.6-8.3 17z" fill="#ce0"/><path d="M1197.6 338.1l7.8-1 6.2-3.2-7.7 1.2z" fill="#14f"/><path d="M1335.5 317l9.2 5.3 3.9 2.3-9.2-4z" fill="#0ed"/><path d="M1277.6 256.9l8.7-7.4 4.8 26.3-8.6 3.2z" fill="#ec0"/><path d="M1219.6 330.4l8.1-7.7 5.8-4.5-8 8.2z" fill="#1df"/><path d="M1299.8 276.9l9 6.2 4.4 14.9-8.8-3.9z" fill="#7e0"/><path d="M1241.7 302.8l8.3-27.1 5.5 5.2-8.3 20.9z" fill="#7f0"/><path d="M1183.4 341.1l7.7 .4 6.5-3.4-7.7-.2z" fill="#13e"/><path d="M1322.2 304.1l9.2 7.3 4.1 5.6-9.1-5z" fill="#1e5"/><path d="M1263.9 253.3l8.6-17.3 5.1 20.9-8.5 15z" fill="#f70"/><path d="M1205.4 337.1l8-3.1 6.2-3.6-8 3.5z" fill="#17f"/><path d="M1344.7 322.3l9.4 5.3 3.8 1-9.3-4z" fill="#1df"/><path d="M1286.3 249.5l8.8 1.6 4.7 25.8-8.7-1.1z" fill="#ea0"/><path d="M1227.7 322.7l8.2-15.6 5.8-4.3-8.2 15.4z" fill="#1e6"/><path d="M1168.9 343.2l7.7 1.2 6.8-3.3-7.7-1z" fill="#13e"/><path d="M1308.8 283.1l9.1 9.8 4.3 11.2-9-6.1z" fill="#5f0"/><path d="M1250 275.7l8.5-39.2 5.4 16.8-8.4 27.6z" fill="#fa0"/><path d="M1191.1 341.5l7.9-.6 6.4-3.8-7.8 1z" fill="#13f"/><path d="M1331.4 311.4l9.4 7.5 3.9 3.4-9.2-5.3z" fill="#1e8"/><path d="M1272.5 236l8.8 .7 5 12.8-8.7 7.4z" fill="#f30"/><path d="M1213.4 334l8.2-7.1 6.1-4.2-8.1 7.7z" fill="#2df"/><path d="M1154.2 345l7.6 1.5 7.1-3.3-7.5-1.4z" fill="#13e"/><path d="M1295.1 251.1l9 11 4.7 21-9-6.2z" fill="#ec0"/><path d="M1235.9 307.1l8.4-29.7 5.7-1.7-8.3 27.1z" fill="#7f0"/><path d="M1176.6 344.4l7.8 .7 6.7-3.6-7.7-.4z" fill="#13e"/><path d="M1317.9 292.9l9.3 10.9 4.2 7.6-9.2-7.3z" fill="#3e1"/><path d="M1258.5 236.5l8.7 .8 5.3-1.3-8.6 17.3z" fill="#f20"/><path d="M1199 340.9l8.1-2.4 6.3-4.5-8 3.1z" fill="#16f"/><path d="M1340.8 318.9l9.5 7.1 3.8 1.6-9.4-5.3z" fill="#0ec"/><path d="M1281.3 236.7l8.9 .8 4.9 13.6-8.8-1.6z" fill="#f20"/><path d="M1221.6 326.9l8.4-14.1 5.9-5.7-8.2 15.6z" fill="#1e7"/><path d="M1161.8 346.5l7.7 1.4 7.1-3.5-7.7-1.2z" fill="#13e"/><path d="M1304.1 262.1l9.3 16 4.5 14.8-9.1-9.8z" fill="#be0"/><path d="M1244.3 277.4l8.7-39.6 5.5-1.3-8.5 39.2z" fill="#f70"/><path d="M1184.4 345.1l8 0 6.6-4.2-7.9 .6z" fill="#13e"/><path d="M1327.2 303.8l9.4 10.7 4.2 4.4-9.4-7.5z" fill="#2e4"/><path d="M1207.1 338.5l8.3-5.5 6.2-6.1-8.2 7.1z" fill="#2cf"/><path d="M1350.3 326l9.8 6.6 3.7 0-9.7-5z" fill="#1de"/><path d="M1146.8 348.3l7.7 1.6 7.3-3.4-7.6-1.5z" fill="#13e"/><path d="M1290.2 237.5l9.2 .7 4.7 23.9-9-11z" fill="#e30"/><path d="M1230 312.8l8.5-26 5.8-9.4-8.4 29.7z" fill="#6f0"/><path d="M1373.6 337.3l10 4.3 3.3-1.8-9.9-3.6z" fill="#17f"/><path d="M1169.5 347.9l7.9 1.1 7-3.9-7.8-.7z" fill="#13e"/><path d="M1313.4 278.1l9.4 16.7 4.4 9-9.3-10.9z" fill="#7e0"/><path d="M1192.4 345.1l8.1-1.4 6.6-5.2-8.1 2.4z" fill="#15f"/><path d="M1336.6 314.5l9.7 9.8 4 1.7-9.5-7.1z" fill="#1e8"/><path d="M1215.4 333l8.4-10.6 6.2-9.6-8.4 14.1z" fill="#0ea"/><path d="M1360.1 332.6l9.9 5.9 3.6-1.2-9.8-4.7z" fill="#3cf"/><path d="M1154.5 349.9l7.8 1.6 7.2-3.6-7.7-1.4z" fill="#13e"/><path d="M1299.4 238.2l9.3 23.4 4.7 16.5-9.3-16z" fill="#e70"/><path d="M1238.5 286.8l8.7-45.5 5.8-3.5-8.7 39.6z" fill="#f80"/><path d="M1383.6 341.6l10.3 3.8 3.1-2.3-10.1-3.3z" fill="#16f"/><path d="M1177.4 349l8.1 .5 6.9-4.4-8 0z" fill="#13e"/><path d="M1322.8 294.8l9.6 15.5 4.2 4.2-9.4-10.7z" fill="#4e1"/><path d="M1261.7 238.5l9 .8 5.4-1.3-8.9-.7z" fill="#f10"/><path d="M1407.3 346.2l10.6 2.9 2.7-2.9-10.4-2.6z" fill="#13e"/><path d="M1200.5 343.7l8.4-3.6 6.5-7.1-8.3 5.5z" fill="#2af"/><path d="M1346.3 324.3l9.9 8.5 3.9-.2-9.8-6.6z" fill="#0ec"/><path d="M1139.2 351.6l7.6 1.9 7.7-3.6-7.7-1.6z" fill="#13e"/><path d="M1285.1 238.8l9.3 .8 5-1.4-9.2-.7z" fill="#f10"/><path d="M1223.8 322.4l8.6-18.4 6.1-17.2-8.5 26z" fill="#4f1"/><path d="M1370 338.5l10.2 5 3.4-1.9-10-4.3z" fill="#29f"/><path d="M1162.3 351.5l7.9 1.4 7.2-3.9-7.9-1.1z" fill="#13e"/><path d="M1308.7 261.6l9.5 25.3 4.6 7.9-9.4-16.7z" fill="#ce0"/><path d="M1393.9 345.4l10.4 3.5 3-2.7-10.3-3.1z" fill="#14f"/><path d="M1185.5 349.5l8.2-.4 6.8-5.4-8.1 1.4z" fill="#14f"/><path d="M1332.4 310.3l9.8 13 4.1 1-9.7-9.8z" fill="#1e5"/><path d="M1270.7 239.3l9.2 .8 5.2-1.3-9-.8z" fill="#f10"/><path d="M1208.9 340.1l8.5-7.5 6.4-10.2-8.4 10.6z" fill="#0ed"/><path d="M1356.2 332.8l10.1 7.2 3.7-1.5-9.9-5.9z" fill="#1df"/><path d="M1146.8 353.5l7.9 1.7 7.6-3.7-7.8-1.6z" fill="#13e"/><path d="M1294.4 239.6l9.4 8.9 4.9 13.1-9.3-23.4z" fill="#f20"/><path d="M1232.4 304l8.8-30.8 6-31.9-8.7 45.5z" fill="#ee0"/><path d="M1380.2 343.5l10.4 4.4 3.3-2.5-10.3-3.8z" fill="#17f"/><path d="M1170.2 352.9l8.1 .8 7.2-4.2-8.1-.5z" fill="#13e"/><path d="M1318.2 286.9l9.8 21 4.4 2.4-9.6-15.5z" fill="#6f0"/><path d="M1256.1 239.9l9 .8 5.6-1.4-9-.8z" fill="#f10"/><path d="M1404.3 348.9l10.7 3.2 2.9-3-10.6-2.9z" fill="#14f"/><path d="M1193.7 349.1l8.4-2.7 6.8-6.3-8.4 3.6z" fill="#17f"/><path d="M1342.2 323.3l10 10.6 4-1.1-9.9-8.5z" fill="#0ea"/><path d="M1131.2 355.1l7.7 2 7.9-3.6-7.6-1.9z" fill="#13e"/><path d="M1279.9 240.1l9.3 .9 5.2-1.4-9.3-.8z" fill="#f10"/><path d="M1217.4 332.6l8.7-13.9 6.3-14.7-8.6 18.4z" fill="#2f5"/><path d="M1366.3 340l10.4 5.9 3.5-2.4-10.2-5z" fill="#2af"/><path d="M1154.7 355.2l8 1.5 7.5-3.8-7.9-1.4z" fill="#13e"/><path d="M1303.8 248.5l9.7 35.2 4.7 3.2-9.5-25.3z" fill="#ea0"/><path d="M1241.2 273.2l9-31.9 5.9-1.4-8.9 1.4z" fill="#f30"/><path d="M1390.6 347.9l10.6 3.9 3.1-2.9-10.4-3.5z" fill="#15f"/><path d="M1178.3 353.7l8.3-.1 7.1-4.5-8.2 .4z" fill="#13f"/><path d="M1328 307.9l9.9 16.2 4.3-.8-9.8-13z" fill="#2e3"/><path d="M1265.1 240.7l9.3 .9 5.5-1.5-9.2-.8z" fill="#f10"/><path d="M1202.1 346.4l8.6-5.5 6.7-8.3-8.5 7.5z" fill="#2cf"/><path d="M1352.2 333.9l10.3 8.3 3.8-2.2-10.1-7.2z" fill="#1de"/><path d="M1138.9 357.1l8 1.8 7.8-3.7-7.9-1.7z" fill="#13e"/><path d="M1289.2 241l9.6 5.5 5 2-9.4-8.9z" fill="#f20"/><path d="M1226.1 318.7l8.9-18.8 6.2-26.7-8.8 30.8z" fill="#8f0"/><path d="M1376.7 345.9l10.5 4.9 3.4-2.9-10.4-4.4z" fill="#17f"/><path d="M1162.7 356.7l8.2 1.1 7.4-4.1-8.1-.8z" fill="#13e"/><path d="M1313.5 283.7l9.9 25.8 4.6-1.6-9.8-21z" fill="#8f0"/><path d="M1250.2 241.3l9.2 .8 5.7-1.4-9-.8z" fill="#f10"/><path d="M1401.2 351.8l10.9 3.4 2.9-3.1-10.7-3.2z" fill="#14f"/><path d="M1186.6 353.6l8.5-1.5 7-5.7-8.4 2.7z" fill="#15f"/><path d="M1337.9 324.1l10.2 12.2 4.1-2.4-10-10.6z" fill="#1e8"/><path d="M1274.4 241.6l9.5 .8 5.3-1.4-9.3-.9z" fill="#f10"/><path d="M1210.7 340.9l8.8-8.9 6.6-13.3-8.7 13.9z" fill="#0e9"/><path d="M1362.5 342.2l10.5 6.6 3.7-2.9-10.4-5.9z" fill="#3bf"/><path d="M1146.9 358.9l8 1.7 7.8-3.9-8-1.5z" fill="#13e"/><path d="M1298.8 246.5l9.8 43 4.9-5.8-9.7-35.2z" fill="#f80"/><path d="M1235 299.9l9.1-18.2 6.1-40.4-9 31.9z" fill="#fc0"/><path d="M1387.2 350.8l10.8 4.2 3.2-3.2-10.6-3.9z" fill="#15f"/><path d="M1170.9 357.8l8.4 .5 7.3-4.7-8.3 .1z" fill="#13e"/><path d="M1323.4 309.5l10.1 18.2 4.4-3.6-9.9-16.2z" fill="#3e2"/><path d="M1259.4 242.1l9.3 .9 5.7-1.4-9.3-.9z" fill="#f10"/><path d="M1195.1 352.1l8.7-3.3 6.9-7.9-8.6 5.5z" fill="#2af"/><path d="M1348.1 336.3l10.4 9.1 4-3.2-10.3-8.3z" fill="#0ee"/><path d="M1283.9 242.4l9.7 22.2 5.2-18.1-9.6-5.5z" fill="#f20"/><path d="M1219.5 332l9-10.6 6.5-21.5-8.9 18.8z" fill="#3f2"/><path d="M1373 348.8l10.7 5.3 3.5-3.3-10.5-4.9z" fill="#28f"/><path d="M1154.9 360.6l8.3 1.4 7.7-4.2-8.2-1.1z" fill="#13e"/><path d="M1308.6 289.5l10 27.3 4.8-7.3-9.9-25.8z" fill="#8f0"/><path d="M1244.1 281.7l9.2-10 6.1-29.6-9.2-.8z" fill="#f50"/><path d="M1398 355l11 3.7 3.1-3.5-10.9-3.4z" fill="#14f"/><path d="M1179.3 358.3l8.6-.5 7.2-5.7-8.5 1.5z" fill="#14f"/><path d="M1333.5 327.7l10.3 12.9 4.3-4.3-10.2-12.2z" fill="#1e8"/><path d="M1268.7 243l9.6 9.7 5.6-10.3-9.5-.8z" fill="#f20"/><path d="M1203.8 348.8l8.9-5 6.8-11.8-8.8 8.9z" fill="#0ee"/><path d="M1358.5 345.4l10.6 7 3.9-3.6-10.5-6.6z" fill="#3cf"/><path d="M1293.6 264.6l9.9 41 5.1-16.1-9.8-43z" fill="#fb0"/><path d="M1228.5 321.4l9.2-9 6.4-30.7-9.1 18.2z" fill="#7f0"/><path d="M1383.7 354.1l10.9 4.5 3.4-3.6-10.8-4.2z" fill="#16f"/><path d="M1163.2 362l8.5 .9 7.6-4.6-8.4-.5z" fill="#13e"/><path d="M1318.6 316.8l10.2 18 4.7-7.1-10.1-18.2z" fill="#2e3"/><path d="M1253.3 271.7l9.6 6.1 5.8-34.8-9.3-.9z" fill="#f50"/><path d="M1187.9 357.8l8.8-1.6 7.1-7.4-8.7 3.3z" fill="#17f"/><path d="M1343.8 340.6l10.5 9.3 4.2-4.5-10.4-9.1z" fill="#0ee"/><path d="M1278.3 252.7l9.9 44.3 5.4-32.4-9.7-22.2z" fill="#f60"/><path d="M1212.7 343.8l9.1-5.4 6.7-17-9 10.6z" fill="#1e8"/><path d="M1369.1 352.4l10.9 5.6 3.7-3.9-10.7-5.3z" fill="#28f"/><path d="M1303.5 305.6l10.2 24.1 4.9-12.9-10-27.3z" fill="#5f0"/><path d="M1237.7 312.4l9.4-3.2 6.2-37.5-9.2 10z" fill="#bf0"/><path d="M1394.6 358.6l11.3 3.8 3.1-3.7-11-3.7z" fill="#14f"/><path d="M1328.8 334.8l10.5 12.2 4.5-6.4-10.3-12.9z" fill="#0e9"/><path d="M1262.9 277.8l9.7 23 5.7-48.1-9.6-9.7z" fill="#f80"/><path d="M1196.7 356.2l8.9-2.3 7.1-10.1-8.9 5z" fill="#3cf"/><path d="M1354.3 349.9l10.8 7 4-4.5-10.6-7z" fill="#3bf"/><path d="M1288.2 297l10 28.2 5.3-19.6-9.9-41z" fill="#af0"/><path d="M1221.8 338.4l9.3-3.9 6.6-22.1-9.2 9z" fill="#2f4"/><path d="M1380 358l11.2 4.6 3.4-4-10.9-4.5z" fill="#16f"/><path d="M1313.7 329.7l10.3 14.9 4.8-9.8-10.2-18z" fill="#1e5"/><path d="M1247.1 309.2l9.6 6.1 6.2-37.5-9.6-6.1z" fill="#bf0"/><path d="M1339.3 347l10.7 8.7 4.3-5.8-10.5-9.3z" fill="#1df"/><path d="M1272.6 300.8l9.9 24.4 5.7-28.2-9.9-44.3z" fill="#be0"/><path d="M1205.6 353.9l9.2-2.2 7-13.3-9.1 5.4z" fill="#0ee"/><path d="M1365.1 356.9l11.1 5.5 3.8-4.4-10.9-5.6z" fill="#28f"/><path d="M1298.2 325.2l10.3 17.4 5.2-12.9-10.2-24.1z" fill="#2e2"/><path d="M1231.1 334.5l9.5-.2 6.5-25.1-9.4 3.2z" fill="#3f2"/><path d="M1391.2 362.6l11.3 3.9 3.4-4.1-11.3-3.8z" fill="#14f"/><path d="M1324 344.6l10.7 10.2 4.6-7.8-10.5-12.2z" fill="#0ec"/><path d="M1256.7 315.3l9.9 14.3 6-28.8-9.7-23z" fill="#8f0"/><path d="M1350 355.7l11 6.5 4.1-5.3-10.8-7z" fill="#2af"/><path d="M1282.5 325.2l10.2 17.4 5.5-17.4-10-28.2z" fill="#3f1"/><path d="M1214.8 351.7l9.4-1.2 6.9-16-9.3 3.9z" fill="#0eb"/><path d="M1376.2 362.4l11.3 4.6 3.7-4.4-11.2-4.6z" fill="#15f"/><path d="M1308.5 342.6l10.5 11.6 5-9.6-10.3-14.9z" fill="#0ea"/><path d="M1240.6 334.3l9.7 4.9 6.4-23.9-9.6-6.1z" fill="#3f2"/><path d="M1334.7 354.8l10.8 7.4 4.5-6.5-10.7-8.7z" fill="#2cf"/><path d="M1266.6 329.6l10.1 14.8 5.8-19.2-9.9-24.4z" fill="#3f2"/><path d="M1361 362.2l11.2 5.2 4-5-11.1-5.5z" fill="#17f"/><path d="M1292.7 342.6l10.5 11.8 5.3-11.8-10.3-17.4z" fill="#1e8"/><path d="M1224.2 350.5l9.6 1.2 6.8-17.4-9.5 .2z" fill="#1e9"/><path d="M1387.5 367l11.6 3.9 3.4-4.4-11.3-3.9z" fill="#14f"/><path d="M1319 354.2l10.8 8.3 4.9-7.7-10.7-10.2z" fill="#1df"/><path d="M1250.3 339.2l10 9.2 6.3-18.8-9.9-14.3z" fill="#2f4"/><path d="M1345.5 362.2l11.2 5.8 4.3-5.8-11-6.5z" fill="#28f"/><path d="M1276.7 344.4l10.3 11.3 5.7-13.1-10.2-17.4z" fill="#1e8"/><path d="M1372.2 367.4l11.5 4.3 3.8-4.7-11.3-4.6z" fill="#15f"/><path d="M1303.2 354.4l10.6 8.4 5.2-8.6-10.5-11.6z" fill="#0ee"/><path d="M1233.8 351.7l9.9 3.9 6.6-16.4-9.7-4.9z" fill="#0e9"/><path d="M1329.8 362.5l11.1 6.3 4.6-6.6-10.8-7.4z" fill="#2af"/><path d="M1260.3 348.4l10.2 9.6 6.2-13.6-10.1-14.8z" fill="#1e9"/><path d="M1356.7 368l11.4 4.7 4.1-5.3-11.2-5.2z" fill="#16f"/><path d="M1287 355.7l10.6 8.2 5.6-9.5-10.5-11.8z" fill="#0ee"/><path d="M1383.7 371.7l11.8 3.9 3.6-4.7-11.6-3.9z" fill="#14f"/><path d="M1313.8 362.8l11 6.4 5-6.7-10.8-8.3z" fill="#3bf"/><path d="M1243.7 355.6l10.1 6.2 6.5-13.4-10-9.2z" fill="#0eb"/><path d="M1340.9 368.8l11.3 5.1 4.5-5.9-11.2-5.8z" fill="#17f"/><path d="M1270.5 358l10.5 7.8 6-10.1-10.3-11.3z" fill="#0ee"/><path d="M1368.1 372.7l11.7 4.1 3.9-5.1-11.5-4.3z" fill="#14f"/><path d="M1297.6 363.9l10.8 6.3 5.4-7.4-10.6-8.4z" fill="#3cf"/><path d="M1324.8 369.2l11.2 5.3 4.9-5.7-11.1-6.3z" fill="#28f"/><path d="M1253.8 361.8l10.4 6.6 6.3-10.4-10.2-9.6z" fill="#1ef"/><path d="M1352.2 373.9l11.6 4.3 4.3-5.5-11.4-4.7z" fill="#15f"/><path d="M1281 365.8l10.7 6.1 5.9-8-10.6-8.2z" fill="#2cf"/><path d="M1379.8 376.8l12 3.7 3.7-4.9-11.8-3.9z" fill="#14f"/><path d="M1308.4 370.2l11.1 5.3 5.3-6.3-11-6.4z" fill="#29f"/><path d="M1336 374.5l11.5 4.6 4.7-5.2-11.3-5.1z" fill="#16f"/><path d="M1264.2 368.4l10.6 5.7 6.2-8.3-10.5-7.8z" fill="#3cf"/><path d="M1363.8 378.2l11.9 3.8 4.1-5.2-11.7-4.1z" fill="#14f"/><path d="M1291.7 371.9l11 5 5.7-6.7-10.8-6.3z" fill="#29f"/><path d="M1319.5 375.5l11.4 4.6 5.1-5.6-11.2-5.3z" fill="#16f"/><path d="M1347.5 379.1l11.8 4.2 4.5-5.1-11.6-4.3z" fill="#14f"/><path d="M1274.8 374.1l10.9 4.8 6-7-10.7-6.1z" fill="#29f"/><path d="M1375.7 382l12.2 3.7 3.9-5.2-12-3.7z" fill="#13e"/><path d="M1302.7 376.9l11.3 4.5 5.5-5.9-11.1-5.3z" fill="#17f"/><path d="M1330.9 380.1l11.7 4.2 4.9-5.2-11.5-4.6z" fill="#15f"/><path d="M1359.3 383.3l12.1 3.9 4.3-5.2-11.9-3.8z" fill="#14f"/><path d="M1285.7 378.9l11.1 4.4 5.9-6.4-11-5z" fill="#17f"/><path d="M1314 381.4l11.6 4.2 5.3-5.5-11.4-4.6z" fill="#15f"/><path d="M1342.6 384.3l12 4 4.7-5-11.8-4.2z" fill="#14f"/><path d="M1268.3 381.5l11 4.1 6.4-6.7-10.9-4.8z" fill="#17f"/><path d="M1371.4 387.2l12.4 3.7 4.1-5.2-12.2-3.7z" fill="#13e"/><path d="M1296.8 383.3l11.5 4 5.7-5.9-11.3-4.5z" fill="#16f"/><path d="M1325.6 385.6l11.9 4.1 5.1-5.4-11.7-4.2z" fill="#15f"/><path d="M1354.6 388.3l12.3 3.9 4.5-5-12.1-3.9z" fill="#13f"/><path d="M1279.3 385.6l11.4 3.9 6.1-6.2-11.1-4.4z" fill="#16f"/><path d="M1308.3 387.3l11.8 4 5.5-5.7-11.6-4.2z" fill="#15f"/><path d="M1337.5 389.7l12.2 3.9 4.9-5.3-12-4z" fill="#14f"/><path d="M1366.9 392.2l12.6 3.8 4.3-5.1-12.4-3.7z" fill="#13e"/><path d="M1290.7 389.5l11.6 3.8 6-6-11.5-4z" fill="#15f"/><path d="M1320.1 391.3l12 3.9 5.4-5.5-11.9-4.1z" fill="#14f"/><path d="M1349.7 393.6l12.5 3.9 4.7-5.3-12.3-3.9z" fill="#13e"/><path d="M1302.3 393.3l11.9 3.9 5.9-5.9-11.8-4z" fill="#14f"/><path d="M1332.1 395.2l12.4 4 5.2-5.6-12.2-3.9z" fill="#14f"/><path d="M1362.2 397.5l12.9 3.9 4.4-5.4-12.6-3.8z" fill="#13e"/><path d="M1314.2 397.2l12.3 3.9 5.6-5.9-12-3.9z" fill="#14f"/><path d="M1344.5 399.2l12.8 3.9 4.9-5.6-12.5-3.9z" fill="#13e"/><path d="M1326.5 401.1l12.7 3.9 5.3-5.8-12.4-4z" fill="#14f"/><path d="M1357.3 403.1l13.1 4 4.7-5.7-12.9-3.9z" fill="#13e"/><path d="M1339.2 405l12.9 4 5.2-5.9-12.8-3.9z" fill="#13e"/><path d="M1352.1 409l13.4 4.1 4.9-6-13.1-4z" fill="#13e"/></g></g><path d="M1120 365V345L1205 318L1215 330L1225 352L1200 368Z" fill="url(#hyaL)"/><path d="M1208.8 320.9l2-.9 5.4-2.3 5.2-2.2 5-2.1M1138.9 357.1l7.9-3.6 7.7-3.6 7.3-3.4M1187.2 334.9l1.6-.7 6.2-2.9 6-2.8 5.8-2.7 5.6-2.6 5.4-2.4 5.3-2.3 2-.8M1148.8 358l5.9-2.8 7.6-3.7 7.2-3.6 7.1-3.5 6.8-3.3 6.5-3.2 6.3-2.9 6.2-3.1 5.9-3 5.8-2.7 5.5-2.6 3.4-1.5M1158.9 358.7l3.8-2 7.5-3.8 7.2-3.9 7-3.9 6.7-3.6 6.5-3.4 6.3-3 6-3.3 5.9-3.2 4.3-2.1M1168.1 359.4l2.8-1.6 7.4-4.1 7.2-4.2 6.9-4.4 6.6-4.2 6.4-3.8 6.2-3.2 5.3-3.1M1182.1 356.5l4.5-2.9 7.1-4.5 6.8-5.4 6.6-5.2 3.2-2.4M1197.8 350l4.3-3.6 2.6-2.1M1206.4 342.8l2.5-2.7 2.4-2.7M1202.9 349.7l.9-.9 4.4-4.9M1212.4 338.9l3.3-4.2M1209.2 349.1l2.6-3.9M1213.6 342.5l5.1-8.9M1222.8 325.5l1.7-3.3M1220.1 342l1.7-3.6 5.1-12.3M1228.5 321.4l.8-2.4M1231 313.9l2.4-8.2M1236.5 293.7l2.4-9.9M1227.7 343.1l3.4-8.6 6.6-22.1M1239.3 305.6l4.8-23.9M1245.6 272.3l2.3-15.5M1238.1 341.5l2.5-7.2 6.5-25.1 6.2-37.5 1.6-12.1M1256.4 246.3l3-4.2 5.7-1.4 5.6-1.4M1247.1 348.1l3.2-8.9 6.4-23.9 6.2-37.5 5.8-34.8 5.7-1.4 5.5-1.5 1.3-.3M1257.1 355.6l3.2-7.2 6.3-18.8 6-28.8 5.7-48.1 5.6-10.3 5.3-1.4 5.2-1.4 1.2-.4M1267.4 363.5l3.1-5.5 6.2-13.6 5.8-19.2 5.7-28.2 5.4-32.4 5.2-18.1 1.9-1.3M1277.1 371.1l3.9-5.3 6-10.1 5.7-13.1 5.5-17.4 5.3-19.6 5.1-16.1 4.9-5.8 1.8 .4M1285.7 378.9l6-7 5.9-8 5.6-9.5 5.3-11.8 5.2-12.9 4.9-12.9 4.8-7.3 4.6-1.6 2.2 .8M1293 387.2l3.8-3.9 5.9-6.4 5.7-6.7 5.4-7.4 5.2-8.6 5-9.6 4.8-9.8 4.7-7.1 4.4-3.6 4.3-.8 4.1 1 4 1.7 3.4 1.4M1302.3 393.3l6-6 5.7-5.9 5.5-5.9 5.3-6.3 5-6.7 4.9-7.7 4.6-7.8 4.5-6.4 4.3-4.3 4.1-2.4 4-1.1 3.9-.2M1314.2 397.2l5.9-5.9 5.5-5.7 5.3-5.5 5.1-5.6 4.9-5.7 4.6-6.6 4.5-6.5 4.3-5.8 4.2-4.5 4-3.2 3.8-2.2 3.7-1.5 1.4-.5M1326.5 401.1l5.6-5.9 5.4-5.5 5.1-5.4 4.9-5.2 4.7-5.2 4.5-5.9 4.3-5.8 4.1-5.3 4-4.5 3.9-3.6 3.7-2.9 3.5-2.4 3.4-1.9M1339.2 405l5.3-5.8 5.2-5.6 4.9-5.3 4.7-5 4.5-5.1 4.3-5.5 4.1-5.3 4-5 3.8-4.4 3.7-3.9 3.5-3.3 3.4-2.9 3.3-2.5 1.2-.9M1352.1 409l5.2-5.9 4.9-5.6 4.7-5.3 4.5-5 4.3-5.2 4.1-5.2 3.9-5.1 3.8-4.7 3.7-4.4 3.4-4 3.4-3.6 3.2-3.2 3.1-2.9 2.3-2.1M1365.5 413.1l4.9-6 4.7-5.7 4.4-5.4 4.3-5.1 4.1-5.2 3.9-5.2 3.7-4.9 3.6-4.7 3.4-4.4 3.4-4.1 3.1-3.7 3.1-3.5 2.9-3.1 2.9-3M1134.1 355.9l4.8 1.2 4 .9M1300.8 392.9l1.5 .4 11.9 3.9 12.3 3.9 12.7 3.9 12.9 4 13.4 4.1M1143.9 352.8l2.9 .7 7.9 1.7 8 1.5 8.2 1.1 6.3 .4M1284.3 378.4l1.4 .5 11.1 4.4 11.5 4 11.8 4 12 3.9 12.4 4 12.8 3.9 13.1 4M1153.5 349.7l1 .2 7.8 1.6 7.9 1.4 8.1 .8 8.3-.1 3.2-.3M1201.6 349.8l2.2-1 3.3-1.7M1209.4 345.8l2.2-1.3M1213.8 343.2l8-4.8 9.3-3.9 9.5-.2 9.7 4.9 10 9.2 10.2 9.6 10.5 7.8 10.7 6.1 11 5 11.3 4.5 11.6 4.2 11.9 4.1 12.2 3.9 12.5 3.9 12.9 3.9M1161.8 346.5l7.7 1.4 7.9 1.1 8.1 .5 8.2-.4 8.4-2.7 3.2-1.6M1216.2 335.7l2.2-2.4M1221.7 329.4l2.3-2.6M1226.2 324.1l2.3-2.7M1230.8 318.9l6.9-6.5 9.4-3.2 9.6 6.1 9.9 14.3 10.1 14.8 10.3 11.3 10.6 8.2 10.8 6.3 11.1 5.3 11.4 4.6 11.7 4.2 12 4 12.3 3.9 12.6 3.8M1170.8 343.6l5.8 .8 7.8 .7 8 0 8.1-1.4 8.4-3.6 2.1-1.3M1229.4 312l2.2-4.8M1233.8 302.3l1.2-2.4 1.1-2.5M1238.3 292.6l2.3-4.6M1242.9 283.7l1.2-2 2.3-3.6M1248.7 275.2l4.6-3.5 9.6 6.1 9.7 23 9.9 24.4 10.2 17.4 10.5 11.8 10.6 8.4 11 6.4 11.2 5.3 11.5 4.6 11.8 4.2 12.1 3.9 12.4 3.7M1177.6 340.4l5.8 .7 7.7 .4 7.9-.6 8.1-2.4 2.1-1M1214.3 334l1.1-1 1-1M1242.3 268.8l2.2-8.9M1251.3 241.4l8.1 .7 9.3 .9 9.6 9.7 9.9 44.3 10 28.2 10.3 17.4 10.5 11.6 10.8 8.3 11.1 6.3 11.3 5.1 11.6 4.3 11.9 3.8 12.2 3.7M1183.3 337.2l6.6 .7 7.7 .2 7.8-1 7-2.6M1259.4 240.2l5.7 .5 9.3 .9 9.5 .8 9.7 22.2 9.9 41 10.2 24.1 10.3 14.9 10.7 10.2 10.8 7.4 11.2 5.8 11.4 4.7 11.7 4.1 12 3.7M1188.8 334.2l7.4 .8 7.7 .1 7.7-1.2 2-.6M1267.3 239l3.4 .3M1277.6 239.9l2.3 .2 9.3 .9 9.6 5.5 9.8 43 10 27.3 10.2 18 10.5 12.2 10.7 8.7 11 6.5 11.2 5.2 11.5 4.3 11.8 3.9M1194 331.2l1 .1 7.4 .6 7.5-.1 6.8-1.2M1293.2 239.5l1.2 .1 1.2 .1M1308.6 267.3l4.9 16.4 9.9 25.8 10.1 18.2 10.3 12.9 10.5 9.3 10.8 7 11.1 5.5 11.3 4.6 11.6 3.9M1199.1 328.3l1.9 .2 7.3 .4 7.5-.3 2.8-.4M1323.1 298l4.9 9.9 9.9 16.2 10.2 12.2 10.4 9.1 10.6 7 10.9 5.6 11.2 4.6 11.3 3.9M1203.2 325.4l3.6 .4 7.3 .4 6.4-.3M1334.8 313.8l7.4 9.5 10 10.6 10.3 8.3 10.5 6.6 10.7 5.3 10.9 4.5 11.3 3.8M1207.1 322.6l5.3 .6 7.2 .4 2.8 0M1343.9 322l2.4 2.3 9.9 8.5 10.1 7.2 10.4 5.9 10.5 4.9 10.8 4.2 11 3.7M1210.8 320l7 .8 5.4 .3M1347.9 324.3l2.4 1.7 9.8 6.6M1366.3 336.4l3.7 2.1 10.2 5 10.4 4.4 10.6 3.9 10.9 3.4M1216.2 317.7l6.9 .8 1.8 .2M1383.6 341.6l10.3 3.8 10.4 3.5 10.7 3.2M1221.4 315.5l4.3 .6M1349.7 325.1l3.5 1.5M1348.9 324.5l3.4 1.2" fill="none" stroke="#002818" stroke-opacity="0.2" stroke-width="0.6"/></g></svg><span class="t" style="left:1125.0px;top:349.8px;font-size:8.1px;color:#4ad8d8;transform:scaleX(1.110);-webkit-text-stroke:0.12px currentColor;">A</span><span class="t" style="left:1149.6px;top:339.9px;font-size:8.1px;color:#4ad8d8;transform:scaleX(1.024);-webkit-text-stroke:0.12px currentColor;">D</span><span class="t" style="left:1176.0px;top:328.9px;font-size:8.1px;color:#4ad8d8;transform:scaleX(1.024);-webkit-text-stroke:0.12px currentColor;">H</span><span class="t" style="left:1200.0px;top:317.2px;font-size:8.1px;color:#4ad8d8;transform:scaleX(0.797);-webkit-text-stroke:0.12px currentColor;">L</span><span class="t" style="left:1128.5px;top:356.6px;font-size:8.1px;color:#4ad8d8;-webkit-text-stroke:0.12px currentColor;">1</span><span class="t" style="left:1152.3px;top:362.6px;font-size:8.1px;color:#4ad8d8;transform:scaleX(1.196);-webkit-text-stroke:0.12px currentColor;">4</span><span class="t" style="left:1186.0px;top:371.6px;font-size:8.1px;color:#4ad8d8;transform:scaleX(1.218);-webkit-text-stroke:0.12px currentColor;">8</span><span class="t" style="left:1222.0px;top:381.6px;font-size:8.1px;color:#4ad8d8;transform:scaleX(1.165);-webkit-text-stroke:0.12px currentColor;">12</span><span class="t" style="left:1262.0px;top:392.2px;font-size:8.1px;color:#4ad8d8;transform:scaleX(1.220);-webkit-text-stroke:0.12px currentColor;">16</span><span class="t" style="left:1307.5px;top:404.2px;font-size:8.1px;color:#4ad8d8;transform:scaleX(1.276);-webkit-text-stroke:0.12px currentColor;">20</span><span class="t" style="left:1357.5px;top:417.9px;font-size:8.1px;color:#4ad8d8;transform:scaleX(1.276);-webkit-text-stroke:0.12px currentColor;">24</span><span class="t" style="left:1428.6px;top:384.8px;font-size:8.1px;color:#90c040;transform:scaleX(1.186);-webkit-text-stroke:0.12px currentColor;">y</span>
<svg class="abs" style="left:295px;top:502px" width="649" height="329" viewBox="295 502 649 329"><path d="M729.7 719.7L755.5 765.1M720.0 719.1L742.1 764.1M710.3 718.4L728.8 763.1M700.6 717.8L715.6 762.1M691.0 717.1L702.5 761.1M681.4 716.5L689.5 760.1M671.9 715.9L676.5 759.1M662.4 715.3L663.6 758.1M652.9 714.6L650.8 757.1M643.5 714.0L638.1 756.2M634.2 713.4L625.4 755.2M624.8 712.8L612.8 754.3M615.6 712.2L600.3 753.3M606.3 711.6L587.9 752.4M597.1 710.9L575.5 751.4M588.0 710.3L563.3 750.5M578.8 709.7L551.0 749.6M569.8 709.1L538.9 748.6M560.7 708.5L526.8 747.7M551.7 708.0L514.8 746.8M542.8 707.4L502.9 745.9M533.8 706.8L491.0 745.0M524.9 706.2L479.2 744.1M516.1 705.6L467.5 743.2M729.7 719.7L516.1 705.6M731.0 722.0L513.6 707.5M732.3 724.3L511.1 709.5M733.7 726.7L508.5 711.5M735.1 729.3L505.7 713.6M736.6 731.9L502.9 715.8M738.2 734.6L500.0 718.1M739.8 737.4L496.9 720.5M741.5 740.4L493.7 722.9M743.2 743.5L490.4 725.5M745.0 746.7L487.0 728.1M746.9 750.0L483.4 730.9M748.9 753.6L479.7 733.8M751.0 757.2L475.8 736.8M753.2 761.1L471.7 739.9M755.5 765.1L467.5 743.2" stroke="#3d9fd0" stroke-width="0.8" fill="none" opacity="0.78"/><path d="M729.7 719.7 L516.1 705.6 L467.5 743.2 L755.5 765.1Z" stroke="#48bce0" stroke-width="0.9" fill="none" opacity="0.9"/><path d="M475 720.4 L751.6 740.3" stroke="#98d450" stroke-width="0.9" fill="none"/><path d="M475 720.4 l6.6 -1.2 l-0.4 2.2z" fill="#98d450"/><path d="M606 760 l1.6 -4.6 M607.4 755.6 l1 -4" stroke="#f07060" stroke-width="0.9" fill="none"/><path d="M603.6 756.6 l2 2.6 l3.4 -3" stroke="#f07060" stroke-width="0.9" fill="none"/><defs><linearGradient id="xpW" gradientUnits="userSpaceOnUse" x1="0" y1="598" x2="0" y2="745"><stop offset="0.000" stop-color="#ff1400"/><stop offset="0.116" stop-color="#f81410"/><stop offset="0.218" stop-color="#ec1420"/><stop offset="0.299" stop-color="#dc1434"/><stop offset="0.381" stop-color="#c4144c"/><stop offset="0.456" stop-color="#a81870"/><stop offset="0.537" stop-color="#881c98"/><stop offset="0.626" stop-color="#6420bc"/><stop offset="0.714" stop-color="#4822d8"/><stop offset="0.803" stop-color="#3024ec"/><stop offset="0.898" stop-color="#1c28f8"/><stop offset="1.000" stop-color="#0c2cff"/></linearGradient><linearGradient id="xpF" gradientUnits="userSpaceOnUse" x1="0" y1="597" x2="0" y2="675"><stop offset="0.000" stop-color="#ff2400"/><stop offset="0.115" stop-color="#ff5000"/><stop offset="0.218" stop-color="#ff8800"/><stop offset="0.333" stop-color="#ffbc00"/><stop offset="0.423" stop-color="#f8e400"/><stop offset="0.526" stop-color="#e4f400"/><stop offset="0.628" stop-color="#b0ff00"/><stop offset="0.808" stop-color="#58ff10"/><stop offset="1.000" stop-color="#20ff30"/></linearGradient><linearGradient id="xpFl" gradientUnits="userSpaceOnUse" x1="0" y1="700" x2="0" y2="752"><stop offset="0.000" stop-color="#1c98ff"/><stop offset="0.288" stop-color="#1880ff"/><stop offset="0.577" stop-color="#1060ff"/><stop offset="1.000" stop-color="#0a30f0"/></linearGradient><linearGradient id="xpO" gradientUnits="userSpaceOnUse" x1="0" y1="606" x2="0" y2="653"><stop offset="0.000" stop-color="#ff3c00"/><stop offset="0.170" stop-color="#ff6c00"/><stop offset="0.383" stop-color="#ff9800"/><stop offset="0.617" stop-color="#f8c400"/><stop offset="0.830" stop-color="#ece800"/><stop offset="1.000" stop-color="#d8f400"/></linearGradient><linearGradient id="xpV" gradientUnits="userSpaceOnUse" x1="0" y1="646" x2="0" y2="755"><stop offset="0.000" stop-color="#ecf000"/><stop offset="0.128" stop-color="#ccf800"/><stop offset="0.257" stop-color="#9cf818"/><stop offset="0.385" stop-color="#64f040"/><stop offset="0.514" stop-color="#3ce888"/><stop offset="0.624" stop-color="#22d0c8"/><stop offset="0.734" stop-color="#1890f0"/><stop offset="0.853" stop-color="#0c50f8"/><stop offset="1.000" stop-color="#0830f8"/></linearGradient><filter id="xpBlur" x="-30%" y="-10%" width="160%" height="120%"><feGaussianBlur stdDeviation="2.2 1.2"/></filter><linearGradient id="xpR" gradientUnits="userSpaceOnUse" x1="0" y1="606" x2="0" y2="682"><stop offset="0.000" stop-color="#ff2000"/><stop offset="0.145" stop-color="#ff4c00"/><stop offset="0.276" stop-color="#ff8c00"/><stop offset="0.421" stop-color="#f8c400"/><stop offset="0.553" stop-color="#ecec00"/><stop offset="0.684" stop-color="#b4ff00"/><stop offset="0.816" stop-color="#70ff00"/><stop offset="1.000" stop-color="#30ff20"/></linearGradient><linearGradient id="xpT" gradientUnits="userSpaceOnUse" x1="0" y1="648" x2="0" y2="730"><stop offset="0.000" stop-color="#ff9040" stop-opacity="0.55"/><stop offset="0.244" stop-color="#f08050" stop-opacity="0.4"/><stop offset="0.634" stop-color="#c060a0" stop-opacity="0.15"/><stop offset="1.000" stop-color="#8040c0" stop-opacity="0"/></linearGradient><linearGradient id="xpC" gradientUnits="userSpaceOnUse" x1="0" y1="668" x2="0" y2="706"><stop offset="0.000" stop-color="#38e048"/><stop offset="0.263" stop-color="#38cc90"/><stop offset="0.579" stop-color="#30c4c0"/><stop offset="1.000" stop-color="#28c8e8"/></linearGradient><linearGradient id="xpVm" gradientUnits="userSpaceOnUse" x1="660" y1="0" x2="690" y2="0"><stop offset="0.000" stop-color="#fff" stop-opacity="1"/><stop offset="0.400" stop-color="#fff" stop-opacity="1"/><stop offset="1.000" stop-color="#fff" stop-opacity="0"/></linearGradient><mask id="xpVmask" maskUnits="userSpaceOnUse" x="600" y="600" width="120" height="170"><rect x="600" y="600" width="120" height="170" fill="url(#xpVm)"/></mask></defs><path d="M467 641.7 L472.1 636.7 L476.1 633.7 L489.1 633.4 L495.2 631.2 L512.2 622.3 L520.3 617.1 L530.3 610.1 L536.3 605.1 L542.4 599 L547.9 596.5 L550.4 600 L553.9 600 L554.4 615.1 L536.8 630.2 L530.3 635.2 L524.3 642.2 L520.3 647.3 L516.2 652.8 L514.7 654.3 L510.2 657.3 L509.2 658.8 L504.2 663.8 L503.2 662.3 L498.2 667.8 L497.2 666.3 L491.6 674.9 L490.1 666.3 L488.6 655.3 L486.6 646.2 L484.1 639.7 L478.1 639.7 L468 643.2Z" fill="url(#xpF)"/><path d="M476.1 633.7 L489.1 633.4 L512.2 622.3 L530.3 610.1 L542.4 599" stroke="#a04000" stroke-opacity="0.25" stroke-width="0.6" fill="none"/><path d="M490.1 635.2L492.1 670.4" stroke="#406000" stroke-opacity="0.22" stroke-width="0.6"/><path d="M494.2 634.4L496.4 665.3" stroke="#406000" stroke-opacity="0.22" stroke-width="0.6"/><path d="M498.2 633.6L500.6 660.3" stroke="#406000" stroke-opacity="0.22" stroke-width="0.6"/><path d="M502.2 632.8L504.8 655.3" stroke="#406000" stroke-opacity="0.22" stroke-width="0.6"/><path d="M506.2 632.0L509.0 650.3" stroke="#406000" stroke-opacity="0.22" stroke-width="0.6"/><path d="M510.2 631.2L513.2 645.2" stroke="#406000" stroke-opacity="0.22" stroke-width="0.6"/><path d="M536.3 613.1 L544.4 610.1 L545.4 604.1 L553.9 600 L556.9 598.5 L571.5 599 L580.5 597.5 L582 598.5 L582.5 604.6 L592.6 600.5 L594.1 603.1 L602.6 600.5 L604.6 600 L605.1 615.1 L605.6 677 L608.7 702.1 L608.7 742.3 L576.5 742.3 L566.5 741.3 L555.4 742.3 L554.4 739.3 L545.4 741.3 L541.4 677Z" fill="url(#xpW)"/><path d="M545.4 603.0L551.4 741.3" stroke="#300030" stroke-opacity="0.22" stroke-width="0.8"/><path d="M556.4 603.0L562.5 741.3" stroke="#300030" stroke-opacity="0.18" stroke-width="0.8"/><path d="M570.5 603.0L576.5 741.3" stroke="#300030" stroke-opacity="0.2" stroke-width="0.8"/><path d="M582.0 603.0L588.1 741.3" stroke="#300030" stroke-opacity="0.25" stroke-width="0.8"/><path d="M593.6 603.0L599.6 741.3" stroke="#300030" stroke-opacity="0.18" stroke-width="0.8"/><path d="M577 707.1 L590.6 705.1 L607.6 702.1 L610.7 703.1 L610.7 727.2 L607.6 747.3 L604.6 748.8 L589.6 752.3 L577.5 747.3 L576.5 742.3Z" fill="url(#xpFl)"/><path d="M577.0 713.2L609.7 708.8M577.0 719.2L609.7 715.1M577.0 725.2L609.7 721.3M577.0 731.2L609.7 727.5M577.0 737.3L609.7 733.7M577.0 743.3L609.7 740.0M585.6 705.4L586.6 749.0M594.1 704.2L594.6 750.2M602.6 703.0L602.6 751.4" stroke="#0030a0" stroke-opacity="0.3" stroke-width="0.6" fill="none"/><path d="M623 606.6 L636.1 620.1 L646.1 644.2 L660.2 649.3 L663.2 677 L663.2 690.1 L653.1 725.2 L644.1 727.2 L642.1 742.3 L631 739.3 L630 747.3 L620 746.3 L604.6 748.8 L607.6 727.2 L610.7 707.1 L613.7 677 L620 624.2Z" fill="url(#xpW)"/><path d="M626.0 610.1L616.0 740.7" stroke="#300030" stroke-opacity="0.2" stroke-width="0.8"/><path d="M636.1 620.1L626.0 739.7" stroke="#300030" stroke-opacity="0.2" stroke-width="0.8"/><path d="M646.1 644.2L641.1 740.7" stroke="#300030" stroke-opacity="0.2" stroke-width="0.8"/><path d="M653.1 647.3L650.1 725.6" stroke="#300030" stroke-opacity="0.2" stroke-width="0.8"/><path d="M688.3 606.1 L700.4 622.1 L706.4 626.2 L708.4 646.2 L710.9 656.8 L720.4 651.3 L728.5 659.3 L726.5 677 L722.5 695.1 L714.4 733.2 L712.4 746.3 L710.4 734.3 L692.3 736.3 L690.3 751.8 L680.3 751.3 L678.3 754.3 L667.2 727.2 L664.2 690.1 L663.2 677 L673.2 650.3 L678.3 631.2Z" fill="url(#xpW)"/><path d="M708.4 646.2 L710.9 656.8 L720.4 651.3 L728.5 659.3 L726.5 677 L722.5 695.1 L714.4 733.2 L710.4 734.3 L709.4 677Z" fill="url(#xpT)"/><path d="M688.3 606.1L684.3 740.7" stroke="#300030" stroke-opacity="0.2" stroke-width="0.8"/><path d="M700.4 622.1L693.3 735.6" stroke="#300030" stroke-opacity="0.2" stroke-width="0.8"/><path d="M706.4 626.2L702.4 734.6" stroke="#300030" stroke-opacity="0.2" stroke-width="0.8"/><path d="M710.9 656.8L708.4 733.6" stroke="#300030" stroke-opacity="0.2" stroke-width="0.8"/><path d="M720.4 651.3L716.4 720.6" stroke="#300030" stroke-opacity="0.2" stroke-width="0.8"/><g filter="url(#xpBlur)"><path d="M659.3 648.5 L676.8 649.5 L684.9 673.2 L687.4 704.3 L684.9 735.5 L678.5 754.6 L672 735.5 L666.2 704.3 L662 673.2Z" fill="url(#xpV)"/></g><path d="M636.1 611.6 L648.6 619.6 L649.6 607.6 L660.2 611.1 L662.2 605.1 L665.2 610.1 L671.2 616.1 L672.7 611.1 L673.7 618.1 L678.3 631.2 L673.2 650.3 L660.2 649.3 L646.1 644.2 L636.1 620.1Z" fill="url(#xpO)"/><path d="M649.6 607.6 L660.2 649.3M662.2 605.1 L672.2 646.2M636.1 620.1 L660.2 632.2 L671.2 616.1" stroke="#803000" stroke-opacity="0.3" stroke-width="0.6" fill="none"/><path d="M726.5 677 L728.5 660.3 L736.5 670.4 L742.5 677 L742.5 677 L739.5 695.1 L735.5 693.1 L732 705.1 L729.5 697.1 L722.5 692.1 L726.5 677Z" fill="url(#xpC)"/><path d="M700.4 622.3 L701.9 621.1 L706.4 626.2 L710.4 608.6 L721.4 611.1 L730.5 612.1 L743.5 608.6 L752.6 617.1 L754.1 630.2 L755.1 642.2 L757.1 652.3 L760.6 669.3 L764.6 677 L764.6 681 L761.6 683.5 L757.6 680 L756.6 677 L748.6 666.3 L736.5 670.4 L728.5 659.3 L720.4 651.3 L710.9 656.8 L707.6 651.3 L703.9 637.2Z" fill="url(#xpR)"/><path d="M721.4 611.1 L724.5 640.2 L728.5 659.3M743.5 608.6 L747.6 642.2 L748.6 666.3M710.4 630.2 L724.5 624.2 L734.5 628.2 L746.6 622.1 L753.6 630.2M710.9 646.2 L724.5 640.2 L735.5 649.3 L747.6 642.2 L755.6 646.2" stroke="#803000" stroke-opacity="0.3" stroke-width="0.6" fill="none"/></svg><span class="t" style="left:521.5px;top:694.5px;font-size:8.1px;color:#4ad8d8;transform:scaleX(1.220);-webkit-text-stroke:0.12px currentColor;">24</span><span class="t" style="left:734.6px;top:708.2px;font-size:8.1px;color:#4ad8d8;transform:scaleX(0.886);-webkit-text-stroke:0.12px currentColor;">1</span><span class="t" style="left:741.0px;top:711.6px;font-size:8.1px;color:#4ad8d8;transform:scaleX(1.110);-webkit-text-stroke:0.12px currentColor;">A</span><span class="t" style="left:745.6px;top:718.6px;font-size:8.1px;color:#4ad8d8;transform:scaleX(1.024);-webkit-text-stroke:0.12px currentColor;">D</span><span class="t" style="left:753.0px;top:729.5px;font-size:8.1px;color:#4ad8d8;transform:scaleX(1.024);-webkit-text-stroke:0.12px currentColor;">H</span><span class="t" style="left:760.4px;top:742.5px;font-size:8.1px;color:#4ad8d8;transform:scaleX(1.152);-webkit-text-stroke:0.12px currentColor;">L</span><span class="t" style="left:770.6px;top:755.2px;font-size:8.1px;color:#4ad8d8;transform:scaleX(1.110);-webkit-text-stroke:0.12px currentColor;">P</span><span class="t" style="left:465.6px;top:709.9px;font-size:8.1px;color:#90c040;transform:scaleX(1.186);-webkit-text-stroke:0.12px currentColor;">y</span><span class="t" style="left:597.0px;top:756.6px;font-size:8.1px;color:#f07060;transform:scaleX(1.236);-webkit-text-stroke:0.12px currentColor;">x</span>
<svg class="abs" style="left:952px;top:502px" width="648" height="329" viewBox="952 502 648 329"><path d="M1131.6 730.5L1226.4 689.5M1139.7 732.5L1233.4 690.8M1147.9 734.6L1240.6 692.1M1156.3 736.7L1247.9 693.4M1164.9 738.9L1255.2 694.8M1173.6 741.1L1262.7 696.1M1182.5 743.3L1270.3 697.5M1191.6 745.6L1278.1 698.9M1200.8 747.9L1285.9 700.4M1210.3 750.3L1293.9 701.8M1220.0 752.8L1302.0 703.3M1229.8 755.3L1310.2 704.8M1239.9 757.8L1318.6 706.4M1250.2 760.4L1327.1 707.9M1260.7 763.0L1335.7 709.5M1271.5 765.8L1344.5 711.1M1282.5 768.5L1353.5 712.7M1293.7 771.4L1362.6 714.4M1305.2 774.3L1371.8 716.1M1317.0 777.2L1381.2 717.8M1329.0 780.3L1390.8 719.6M1341.3 783.4L1400.6 721.3M1354.0 786.5L1410.5 723.2M1366.9 789.8L1420.6 725.0M1131.6 730.5L1366.9 789.8M1139.5 727.1L1371.6 784.1M1147.1 723.8L1376.1 778.7M1154.5 720.6L1380.4 773.5M1161.6 717.5L1384.6 768.5M1168.5 714.6L1388.5 763.7M1175.1 711.7L1392.3 759.1M1181.5 708.9L1396.0 754.7M1187.8 706.2L1399.5 750.5M1193.8 703.6L1402.8 746.4M1199.7 701.1L1406.1 742.5M1205.3 698.6L1409.2 738.8M1210.8 696.2L1412.2 735.1M1216.2 693.9L1415.1 731.6M1221.4 691.7L1417.9 728.3M1226.4 689.5L1420.6 725.0" stroke="#3d9fd0" stroke-width="0.8" fill="none" opacity="0.78"/><path d="M1131.6 730.5 L1366.9 789.8 L1420.6 725 L1226.4 689.5Z" stroke="#48bce0" stroke-width="0.9" fill="none" opacity="0.9"/><path d="M1300 733 L1418.6 758.2" stroke="#98d450" stroke-width="0.9" fill="none"/><path d="M1413.4 755.2 l6 3.2 l-6.6 0.2z" fill="#98d450"/><path d="M1226.1 761.6 L1250 746" stroke="#f07060" stroke-width="0.9" fill="none"/><defs><linearGradient id="ypM" gradientUnits="userSpaceOnUse" x1="0" y1="625" x2="0" y2="730"><stop offset="0.000" stop-color="#f8d000"/><stop offset="0.067" stop-color="#f0f000"/><stop offset="0.143" stop-color="#c0ff00"/><stop offset="0.219" stop-color="#80ff00"/><stop offset="0.314" stop-color="#50f820"/><stop offset="0.429" stop-color="#38e860"/><stop offset="0.543" stop-color="#28d0a0"/><stop offset="0.657" stop-color="#20a8e0"/><stop offset="0.771" stop-color="#1478ff"/><stop offset="1.000" stop-color="#0c48ff"/></linearGradient><linearGradient id="ypL" gradientUnits="userSpaceOnUse" x1="0" y1="603" x2="0" y2="745"><stop offset="0.000" stop-color="#ff3000"/><stop offset="0.063" stop-color="#ff4000"/><stop offset="0.155" stop-color="#f03818"/><stop offset="0.261" stop-color="#e02c38"/><stop offset="0.366" stop-color="#c82458"/><stop offset="0.458" stop-color="#a82080"/><stop offset="0.556" stop-color="#8020a8"/><stop offset="0.655" stop-color="#5822cc"/><stop offset="0.754" stop-color="#3824e8"/><stop offset="0.866" stop-color="#1c28f8"/><stop offset="1.000" stop-color="#0c30ff"/></linearGradient><linearGradient id="ypLm" gradientUnits="userSpaceOnUse" x1="1150" y1="0" x2="1199" y2="0"><stop offset="0.000" stop-color="#fff" stop-opacity="1"/><stop offset="0.612" stop-color="#fff" stop-opacity="1"/><stop offset="1.000" stop-color="#fff" stop-opacity="0"/></linearGradient><mask id="ypLmask" maskUnits="userSpaceOnUse" x="1140" y="590" width="80" height="170"><rect x="1140" y="590" width="80" height="170" fill="url(#ypLm)"/></mask><linearGradient id="ypF" gradientUnits="userSpaceOnUse" x1="0" y1="605" x2="0" y2="657"><stop offset="0.000" stop-color="#ff3000"/><stop offset="0.192" stop-color="#ff6800"/><stop offset="0.385" stop-color="#ffa000"/><stop offset="0.538" stop-color="#f8d000"/><stop offset="0.692" stop-color="#e8f000"/><stop offset="0.865" stop-color="#a0ff00"/><stop offset="1.000" stop-color="#50ff10"/></linearGradient><linearGradient id="ypFl" gradientUnits="userSpaceOnUse" x1="0" y1="702" x2="0" y2="762"><stop offset="0.000" stop-color="#1880ff"/><stop offset="0.267" stop-color="#1c90ff"/><stop offset="0.633" stop-color="#1470ff"/><stop offset="1.000" stop-color="#0c48ff"/></linearGradient><linearGradient id="ypW" gradientUnits="userSpaceOnUse" x1="0" y1="618" x2="0" y2="790"><stop offset="0.000" stop-color="#ff2808"/><stop offset="0.128" stop-color="#f01818"/><stop offset="0.233" stop-color="#e01830"/><stop offset="0.314" stop-color="#cc1848"/><stop offset="0.395" stop-color="#b01868"/><stop offset="0.477" stop-color="#901c94"/><stop offset="0.552" stop-color="#6c20b8"/><stop offset="0.628" stop-color="#4c22d8"/><stop offset="0.709" stop-color="#3026f0"/><stop offset="0.814" stop-color="#1830ff"/><stop offset="1.000" stop-color="#0c38ff"/></linearGradient><linearGradient id="ypI" gradientUnits="userSpaceOnUse" x1="0" y1="595" x2="0" y2="650"><stop offset="0.000" stop-color="#ff2000"/><stop offset="0.309" stop-color="#f81810"/><stop offset="0.636" stop-color="#e41428"/><stop offset="1.000" stop-color="#cc1440"/></linearGradient><linearGradient id="ypR" gradientUnits="userSpaceOnUse" x1="1363.3889112093211" y1="608.1016472478907" x2="1420.6408196062675" y2="653.3005222981117"><stop offset="0.000" stop-color="#ff2800"/><stop offset="0.220" stop-color="#ff5000"/><stop offset="0.420" stop-color="#ff9000"/><stop offset="0.600" stop-color="#ffc800"/><stop offset="0.740" stop-color="#f4f000"/><stop offset="0.850" stop-color="#b0ff00"/><stop offset="1.000" stop-color="#40ff10"/></linearGradient><linearGradient id="ypWm" gradientUnits="userSpaceOnUse" x1="1238" y1="0" x2="1300" y2="0"><stop offset="0.000" stop-color="#fff" stop-opacity="0"/><stop offset="0.194" stop-color="#fff" stop-opacity="1"/><stop offset="1.000" stop-color="#fff" stop-opacity="1"/></linearGradient><mask id="ypWmask" maskUnits="userSpaceOnUse" x="1230" y="585" width="160" height="220"><rect x="1230" y="585" width="160" height="220" fill="url(#ypWm)"/></mask></defs><path d="M1125.5 656.8 L1128.1 646.3 L1131.1 637.2 L1139.1 624.2 L1145.1 615.1 L1154.2 605.6 L1156.2 610.1 L1155.2 618.1 L1150.2 633.2 L1149.2 632.2 L1144.1 632.2 L1139.1 634.2 L1134.1 643.3 L1129.1 653.3Z" fill="url(#ypF)"/><path d="M1150.2 633.2 L1155.2 618.1 L1154.2 605.6 L1155.2 609.1 L1158.2 610.1 L1164.2 606.1 L1165.7 610.1 L1167.2 609.1 L1177.3 602.6 L1178.3 606.1 L1185.3 616.1 L1192.3 626.2 L1195.4 629.2 L1200.4 633.2 L1209.4 639.2 L1215.4 642.8 L1223.5 645.3 L1230.5 644.3 L1237.5 642.3 L1241.6 644.3 L1244.6 641.2 L1246.6 633.2 L1250.6 615.1 L1255.6 615.1 L1255.6 672 L1260.6 706.2 L1260.6 742.3 L1235.5 751.3 L1208.4 748.3 L1185.3 744.3 L1180.3 742.3 L1169.7 726.2 L1168.2 714.2 L1158.2 672Z" fill="url(#ypM)"/><g mask="url(#ypLmask)"><path d="M1150.2 633.2 L1155.2 618.1 L1154.2 605.6 L1155.2 609.1 L1158.2 610.1 L1164.2 606.1 L1165.7 610.1 L1167.2 609.1 L1177.3 602.6 L1178.3 606.1 L1185.3 616.1 L1192.3 626.2 L1195.4 629.2 L1200.4 633.2 L1209.4 639.2 L1215.4 642.8 L1223.5 645.3 L1230.5 644.3 L1237.5 642.3 L1241.6 644.3 L1244.6 641.2 L1246.6 633.2 L1250.6 615.1 L1255.6 615.1 L1255.6 672 L1260.6 706.2 L1260.6 742.3 L1235.5 751.3 L1208.4 748.3 L1185.3 744.3 L1180.3 742.3 L1169.7 726.2 L1168.2 714.2 L1158.2 672Z" fill="url(#ypL)"/></g><path d="M1155.2 618.1L1162.2 715.6M1165.7 610.1L1174.3 723.6M1178.3 606.1L1185.3 730.6M1194.3 629.2L1199.4 710.6M1209.4 639.2L1214.4 708.5M1223.5 645.3L1227.5 705.5M1237.5 642.3L1240.6 704.5" stroke="#200030" stroke-opacity="0.22" stroke-width="0.8" fill="none"/><path d="M1184.3 712.2 L1195.4 709.2 L1215.4 706.2 L1235.5 703.1 L1260.6 706.2 L1260.6 759 L1259.3 759.1 L1247.2 759.6 L1237.2 750.6 L1228.1 752.1 L1242.6 755.4 L1235.5 751.3 L1226.5 751.3 L1216.4 746.3 L1208.4 748.3 L1198.4 743.3 L1191.3 746.3 L1185.3 744.3 L1180.3 742.3Z" fill="url(#ypFl)"/><clipPath id="ypFc"><path d="M1184.3 712.2 L1195.4 709.2 L1215.4 706.2 L1235.5 703.1 L1260.6 706.2 L1260.6 759 L1259.3 759.1 L1247.2 759.6 L1237.2 750.6 L1228.1 752.1 L1242.6 755.4 L1235.5 751.3 L1226.5 751.3 L1216.4 746.3 L1208.4 748.3 L1198.4 743.3 L1191.3 746.3 L1185.3 744.3 L1180.3 742.3Z"/></clipPath><path clip-path="url(#ypFc)" d="M1183.7 716.7L1260.6 713.2M1183.1 721.2L1260.6 720.2M1182.5 725.7L1260.6 727.2M1181.9 730.3L1260.6 734.3M1181.3 734.8L1260.6 741.3M1180.7 739.3L1260.6 748.3M1180.1 743.8L1260.6 755.4M1191.3 709.7L1179.3 742.3M1200.9 708.9L1191.3 745.3M1210.4 708.1L1203.4 748.3M1220.0 707.3L1215.4 751.3M1229.5 706.5L1227.5 754.4M1239.0 705.6L1239.5 757.4M1248.6 704.8L1251.6 760.4M1258.1 704.0L1263.7 763.4" stroke="#0030a0" stroke-opacity="0.3" stroke-width="0.6" fill="none"/><path d="M1256.1 594.5 L1275 597.6 L1287.1 596 L1305.1 596 L1325.2 597.1 L1345.3 600.1 L1361.4 603.6 L1368.4 606.1 L1371.4 633.2 L1368.4 630.2 L1349.3 631.2 L1335.3 633.2 L1323.2 638.2 L1316.2 643.3 L1304.1 630.2 L1292.1 631.2 L1280 619.2 L1275 620.2 L1268.7 621.2 L1255.6 615.1 L1254.6 601.1Z" fill="url(#ypW)"/><g mask="url(#ypWmask)"><path d="M1246.6 633.2 L1250.6 615.1 L1254.6 601.1 L1256.1 594.5 L1268.7 621.2 L1275 620.2 L1280 619.2 L1292.1 631.2 L1304.1 630.2 L1316.2 643.3 L1323.2 638.2 L1335.3 633.2 L1349.3 631.2 L1368.4 630.2 L1371.4 633.2 L1368.4 672 L1363.4 692.1 L1359.4 714.2 L1355.4 742.3 L1353.3 759 L1355 760.1 L1348.7 773.2 L1335.6 765.2 L1324.6 760.1 L1308.5 770.2 L1295.4 764.2 L1285.4 759.1 L1273.3 753.1 L1259.3 759.1 L1255.3 730 L1253.6 702.1 L1249.6 672 L1244.6 641.2Z" fill="url(#ypW)"/></g><path d="M1304.1 630.2 L1323.2 619.7 L1335.3 621.7 L1349.3 621.2 L1368.4 630.2 L1349.3 631.2 L1335.3 633.2 L1323.2 638.2 L1316.2 643.3Z" fill="#ff4200"/><clipPath id="ypWc"><path d="M1246.6 633.2 L1250.6 615.1 L1254.6 601.1 L1256.1 594.5 L1268.7 621.2 L1275 620.2 L1280 619.2 L1292.1 631.2 L1304.1 630.2 L1316.2 643.3 L1323.2 638.2 L1335.3 633.2 L1349.3 631.2 L1368.4 630.2 L1371.4 633.2 L1368.4 672 L1363.4 692.1 L1359.4 714.2 L1355.4 742.3 L1353.3 759 L1355 760.1 L1348.7 773.2 L1335.6 765.2 L1324.6 760.1 L1308.5 770.2 L1295.4 764.2 L1285.4 759.1 L1273.3 753.1 L1259.3 759.1 L1255.3 730 L1253.6 702.1 L1249.6 672 L1244.6 641.2ZM1256.1 594.5 L1275 597.6 L1287.1 596 L1305.1 596 L1325.2 597.1 L1345.3 600.1 L1361.4 603.6 L1368.4 606.1 L1371.4 633.2 L1368.4 630.2 L1349.3 631.2 L1335.3 633.2 L1323.2 638.2 L1316.2 643.3 L1304.1 630.2 L1292.1 631.2 L1280 619.2 L1275 620.2 L1268.7 621.2 L1255.6 615.1 L1254.6 601.1Z"/></clipPath><path clip-path="url(#ypWc)" d="M1280.0 619.2L1283.0 755.8M1292.1 631.2L1295.1 763.8M1304.1 630.2L1308.1 769.8M1316.2 643.3L1320.2 775.8M1335.3 633.2L1337.3 780.9M1349.3 631.2L1349.3 783.9M1365.4 630.2L1362.4 735.7M1287.1 597.1L1286.0 628.2M1296.1 596.5L1295.1 628.2M1305.1 596.2L1304.1 628.2M1315.2 596.5L1314.2 628.2M1325.2 597.3L1324.2 628.2M1335.3 598.5L1334.3 628.2M1345.3 600.3L1344.3 628.2M1354.3 602.3L1353.3 628.2" stroke="#300020" stroke-opacity="0.25" stroke-width="0.8" fill="none"/><path d="M1361.4 603.6 L1368.4 606.1 L1375.4 612.1 L1385.5 619.2 L1395.5 626.2 L1405.6 633.2 L1415.6 641.2 L1422.6 643.8 L1424.7 649.3 L1426.7 656.3 L1415.6 657.8 L1408.6 650.3 L1404.6 653.3 L1399.5 651.3 L1397 656.8 L1390.5 647.3 L1381.5 641.2 L1375.4 638.2 L1372.9 635.2 L1371.4 633.2 L1368.4 630.2 L1361.4 625.2Z" fill="url(#ypR)"/><path d="M1368.4 606.1 L1375.4 625.2 L1390.5 647.3M1375.4 612.1 L1383.5 631.2 L1397 656.8M1385.5 619.2 L1393.5 635.2 L1404.6 653.3M1395.5 626.2 L1403.6 641.2 L1408.6 650.3M1361.4 615.1 L1375.4 625.2 L1395.5 637.2 L1415.6 649.3" stroke="#803000" stroke-opacity="0.3" stroke-width="0.6" fill="none"/></svg><span class="t" style="left:1125.0px;top:720.0px;font-size:8.1px;color:#4ad8d8;transform:scaleX(1.110);-webkit-text-stroke:0.12px currentColor;">A</span><span class="t" style="left:1147.8px;top:710.0px;font-size:8.1px;color:#4ad8d8;transform:scaleX(1.024);-webkit-text-stroke:0.12px currentColor;">D</span><span class="t" style="left:1127.0px;top:726.2px;font-size:8.1px;color:#4ad8d8;transform:scaleX(0.974);-webkit-text-stroke:0.12px currentColor;">1</span><span class="t" style="left:1150.5px;top:732.1px;font-size:8.1px;color:#4ad8d8;transform:scaleX(1.218);-webkit-text-stroke:0.12px currentColor;">4</span><span class="t" style="left:1185.0px;top:741.1px;font-size:8.1px;color:#4ad8d8;transform:scaleX(1.218);-webkit-text-stroke:0.12px currentColor;">8</span><span class="t" style="left:1220.8px;top:752.0px;font-size:8.1px;color:#4ad8d8;transform:scaleX(1.176);-webkit-text-stroke:0.12px currentColor;">12</span><span class="t" style="left:1262.8px;top:763.0px;font-size:8.1px;color:#4ad8d8;transform:scaleX(1.220);-webkit-text-stroke:0.12px currentColor;">16</span><span class="t" style="left:1308.0px;top:774.0px;font-size:8.1px;color:#4ad8d8;transform:scaleX(1.264);-webkit-text-stroke:0.12px currentColor;">20</span><span class="t" style="left:1358.2px;top:787.6px;font-size:8.1px;color:#4ad8d8;transform:scaleX(1.264);-webkit-text-stroke:0.12px currentColor;">24</span><span class="t" style="left:1430.2px;top:754.6px;font-size:8.1px;color:#90c040;transform:scaleX(1.186);-webkit-text-stroke:0.12px currentColor;">y</span>
<svg class="abs" style="left:770px;top:138px" width="20" height="62" viewBox="770 138 20 62"><linearGradient id="lg775_142" gradientUnits="userSpaceOnUse" x1="0" y1="142" x2="0" y2="194"><stop offset="0.000" stop-color="#ff1a00"/><stop offset="0.120" stop-color="#ff5a00"/><stop offset="0.270" stop-color="#ffe800"/><stop offset="0.400" stop-color="#70f000"/><stop offset="0.520" stop-color="#00e000"/><stop offset="0.640" stop-color="#00e080"/><stop offset="0.770" stop-color="#00e8f0"/><stop offset="0.880" stop-color="#0070ff"/><stop offset="1.000" stop-color="#0010ff"/></linearGradient><rect x="775" y="142" width="4.4" height="52" fill="url(#lg775_142)"/></svg><svg class="abs" style="left:1428px;top:138px" width="20" height="62" viewBox="1428 138 20 62"><linearGradient id="lg1433_142" gradientUnits="userSpaceOnUse" x1="0" y1="142" x2="0" y2="194"><stop offset="0.000" stop-color="#ff1a00"/><stop offset="0.120" stop-color="#ff5a00"/><stop offset="0.270" stop-color="#ffe800"/><stop offset="0.400" stop-color="#70f000"/><stop offset="0.520" stop-color="#00e000"/><stop offset="0.640" stop-color="#00e080"/><stop offset="0.770" stop-color="#00e8f0"/><stop offset="0.880" stop-color="#0070ff"/><stop offset="1.000" stop-color="#0010ff"/></linearGradient><rect x="1433.2" y="142" width="4.6" height="52" fill="url(#lg1433_142)"/></svg><svg class="abs" style="left:770px;top:506px" width="20" height="62" viewBox="770 506 20 62"><linearGradient id="lg776_510" gradientUnits="userSpaceOnUse" x1="0" y1="510.2" x2="0" y2="562"><stop offset="0.000" stop-color="#ff1a00"/><stop offset="0.120" stop-color="#ff5a00"/><stop offset="0.270" stop-color="#ffe800"/><stop offset="0.400" stop-color="#70f000"/><stop offset="0.520" stop-color="#00e000"/><stop offset="0.640" stop-color="#00e080"/><stop offset="0.770" stop-color="#00e8f0"/><stop offset="0.880" stop-color="#0070ff"/><stop offset="1.000" stop-color="#0010ff"/></linearGradient><rect x="776.6" y="510.2" width="4.4" height="51.80000000000001" fill="url(#lg776_510)"/></svg><svg class="abs" style="left:1428px;top:506px" width="20" height="62" viewBox="1428 506 20 62"><linearGradient id="lg1435_510" gradientUnits="userSpaceOnUse" x1="0" y1="510.2" x2="0" y2="562"><stop offset="0.000" stop-color="#ff1a00"/><stop offset="0.120" stop-color="#ff5a00"/><stop offset="0.270" stop-color="#ffe800"/><stop offset="0.400" stop-color="#70f000"/><stop offset="0.520" stop-color="#00e000"/><stop offset="0.640" stop-color="#00e080"/><stop offset="0.770" stop-color="#00e8f0"/><stop offset="0.880" stop-color="#0070ff"/><stop offset="1.000" stop-color="#0010ff"/></linearGradient><rect x="1435" y="510.2" width="4.3" height="51.80000000000001" fill="url(#lg1435_510)"/></svg><span class="t" style="left:794.8px;top:136.7px;font-size:8.9px;color:#eeee00;transform:scaleX(0.987);-webkit-text-stroke:0.12px currentColor;">0.0671</span><span class="t" style="left:1453.0px;top:136.7px;font-size:8.9px;color:#eeee00;transform:scaleX(1.009);-webkit-text-stroke:0.12px currentColor;">0.0671</span><span class="t" style="left:794.8px;top:148.4px;font-size:8.9px;color:#eeee00;transform:scaleX(0.987);-webkit-text-stroke:0.12px currentColor;">0.0503</span><span class="t" style="left:1453.0px;top:148.4px;font-size:8.9px;color:#eeee00;transform:scaleX(1.009);-webkit-text-stroke:0.12px currentColor;">0.0503</span><span class="t" style="left:794.8px;top:159.8px;font-size:8.9px;color:#eeee00;transform:scaleX(0.987);-webkit-text-stroke:0.12px currentColor;">0.0336</span><span class="t" style="left:1453.0px;top:159.8px;font-size:8.9px;color:#eeee00;transform:scaleX(1.009);-webkit-text-stroke:0.12px currentColor;">0.0336</span><span class="t" style="left:794.8px;top:171.4px;font-size:8.9px;color:#eeee00;transform:scaleX(0.987);-webkit-text-stroke:0.12px currentColor;">0.0169</span><span class="t" style="left:1453.0px;top:171.4px;font-size:8.9px;color:#eeee00;transform:scaleX(1.009);-webkit-text-stroke:0.12px currentColor;">0.0169</span><span class="t" style="left:794.8px;top:182.8px;font-size:8.9px;color:#eeee00;transform:scaleX(0.987);-webkit-text-stroke:0.12px currentColor;">0.0002</span><span class="t" style="left:1453.0px;top:182.8px;font-size:8.9px;color:#eeee00;transform:scaleX(1.009);-webkit-text-stroke:0.12px currentColor;">0.0002</span><span class="t" style="left:800.0px;top:195.1px;font-size:8.9px;color:#eeee00;transform:scaleX(0.963);-webkit-text-stroke:0.12px currentColor;">A/m</span><span class="t" style="left:1458.4px;top:195.1px;font-size:8.9px;color:#eeee00;transform:scaleX(0.989);-webkit-text-stroke:0.12px currentColor;">A/m</span><span class="t" style="left:791.9px;top:504.8px;font-size:8.9px;color:#eeee00;-webkit-text-stroke:0.12px currentColor;">179.5736</span><span class="t" style="left:793.7px;top:516.1px;font-size:8.9px;color:#eeee00;transform:scaleX(1.006);-webkit-text-stroke:0.12px currentColor;">89.7290</span><span class="t" style="left:794.0px;top:527.9px;font-size:8.9px;color:#eeee00;transform:scaleX(1.019);-webkit-text-stroke:0.12px currentColor;">-0.1155</span><span class="t" style="left:791.4px;top:539.8px;font-size:8.9px;color:#eeee00;transform:scaleX(0.970);-webkit-text-stroke:0.12px currentColor;">-89.9601</span><span class="t" style="left:788.8px;top:551.4px;font-size:8.9px;color:#eeee00;-webkit-text-stroke:0.12px currentColor;">-179.8046</span><span class="t" style="left:1450.8px;top:504.8px;font-size:8.9px;color:#eeee00;transform:scaleX(0.978);-webkit-text-stroke:0.12px currentColor;">179.3446</span><span class="t" style="left:1452.3px;top:516.1px;font-size:8.9px;color:#eeee00;transform:scaleX(1.010);-webkit-text-stroke:0.12px currentColor;">89.6049</span><span class="t" style="left:1452.8px;top:527.9px;font-size:8.9px;color:#eeee00;transform:scaleX(0.973);-webkit-text-stroke:0.12px currentColor;">-0.1348</span><span class="t" style="left:1450.0px;top:539.8px;font-size:8.9px;color:#eeee00;-webkit-text-stroke:0.12px currentColor;">-89.8745</span><span class="t" style="left:1447.5px;top:551.4px;font-size:8.9px;color:#eeee00;transform:scaleX(0.988);-webkit-text-stroke:0.12px currentColor;">-179.6142</span>
</body></html>
